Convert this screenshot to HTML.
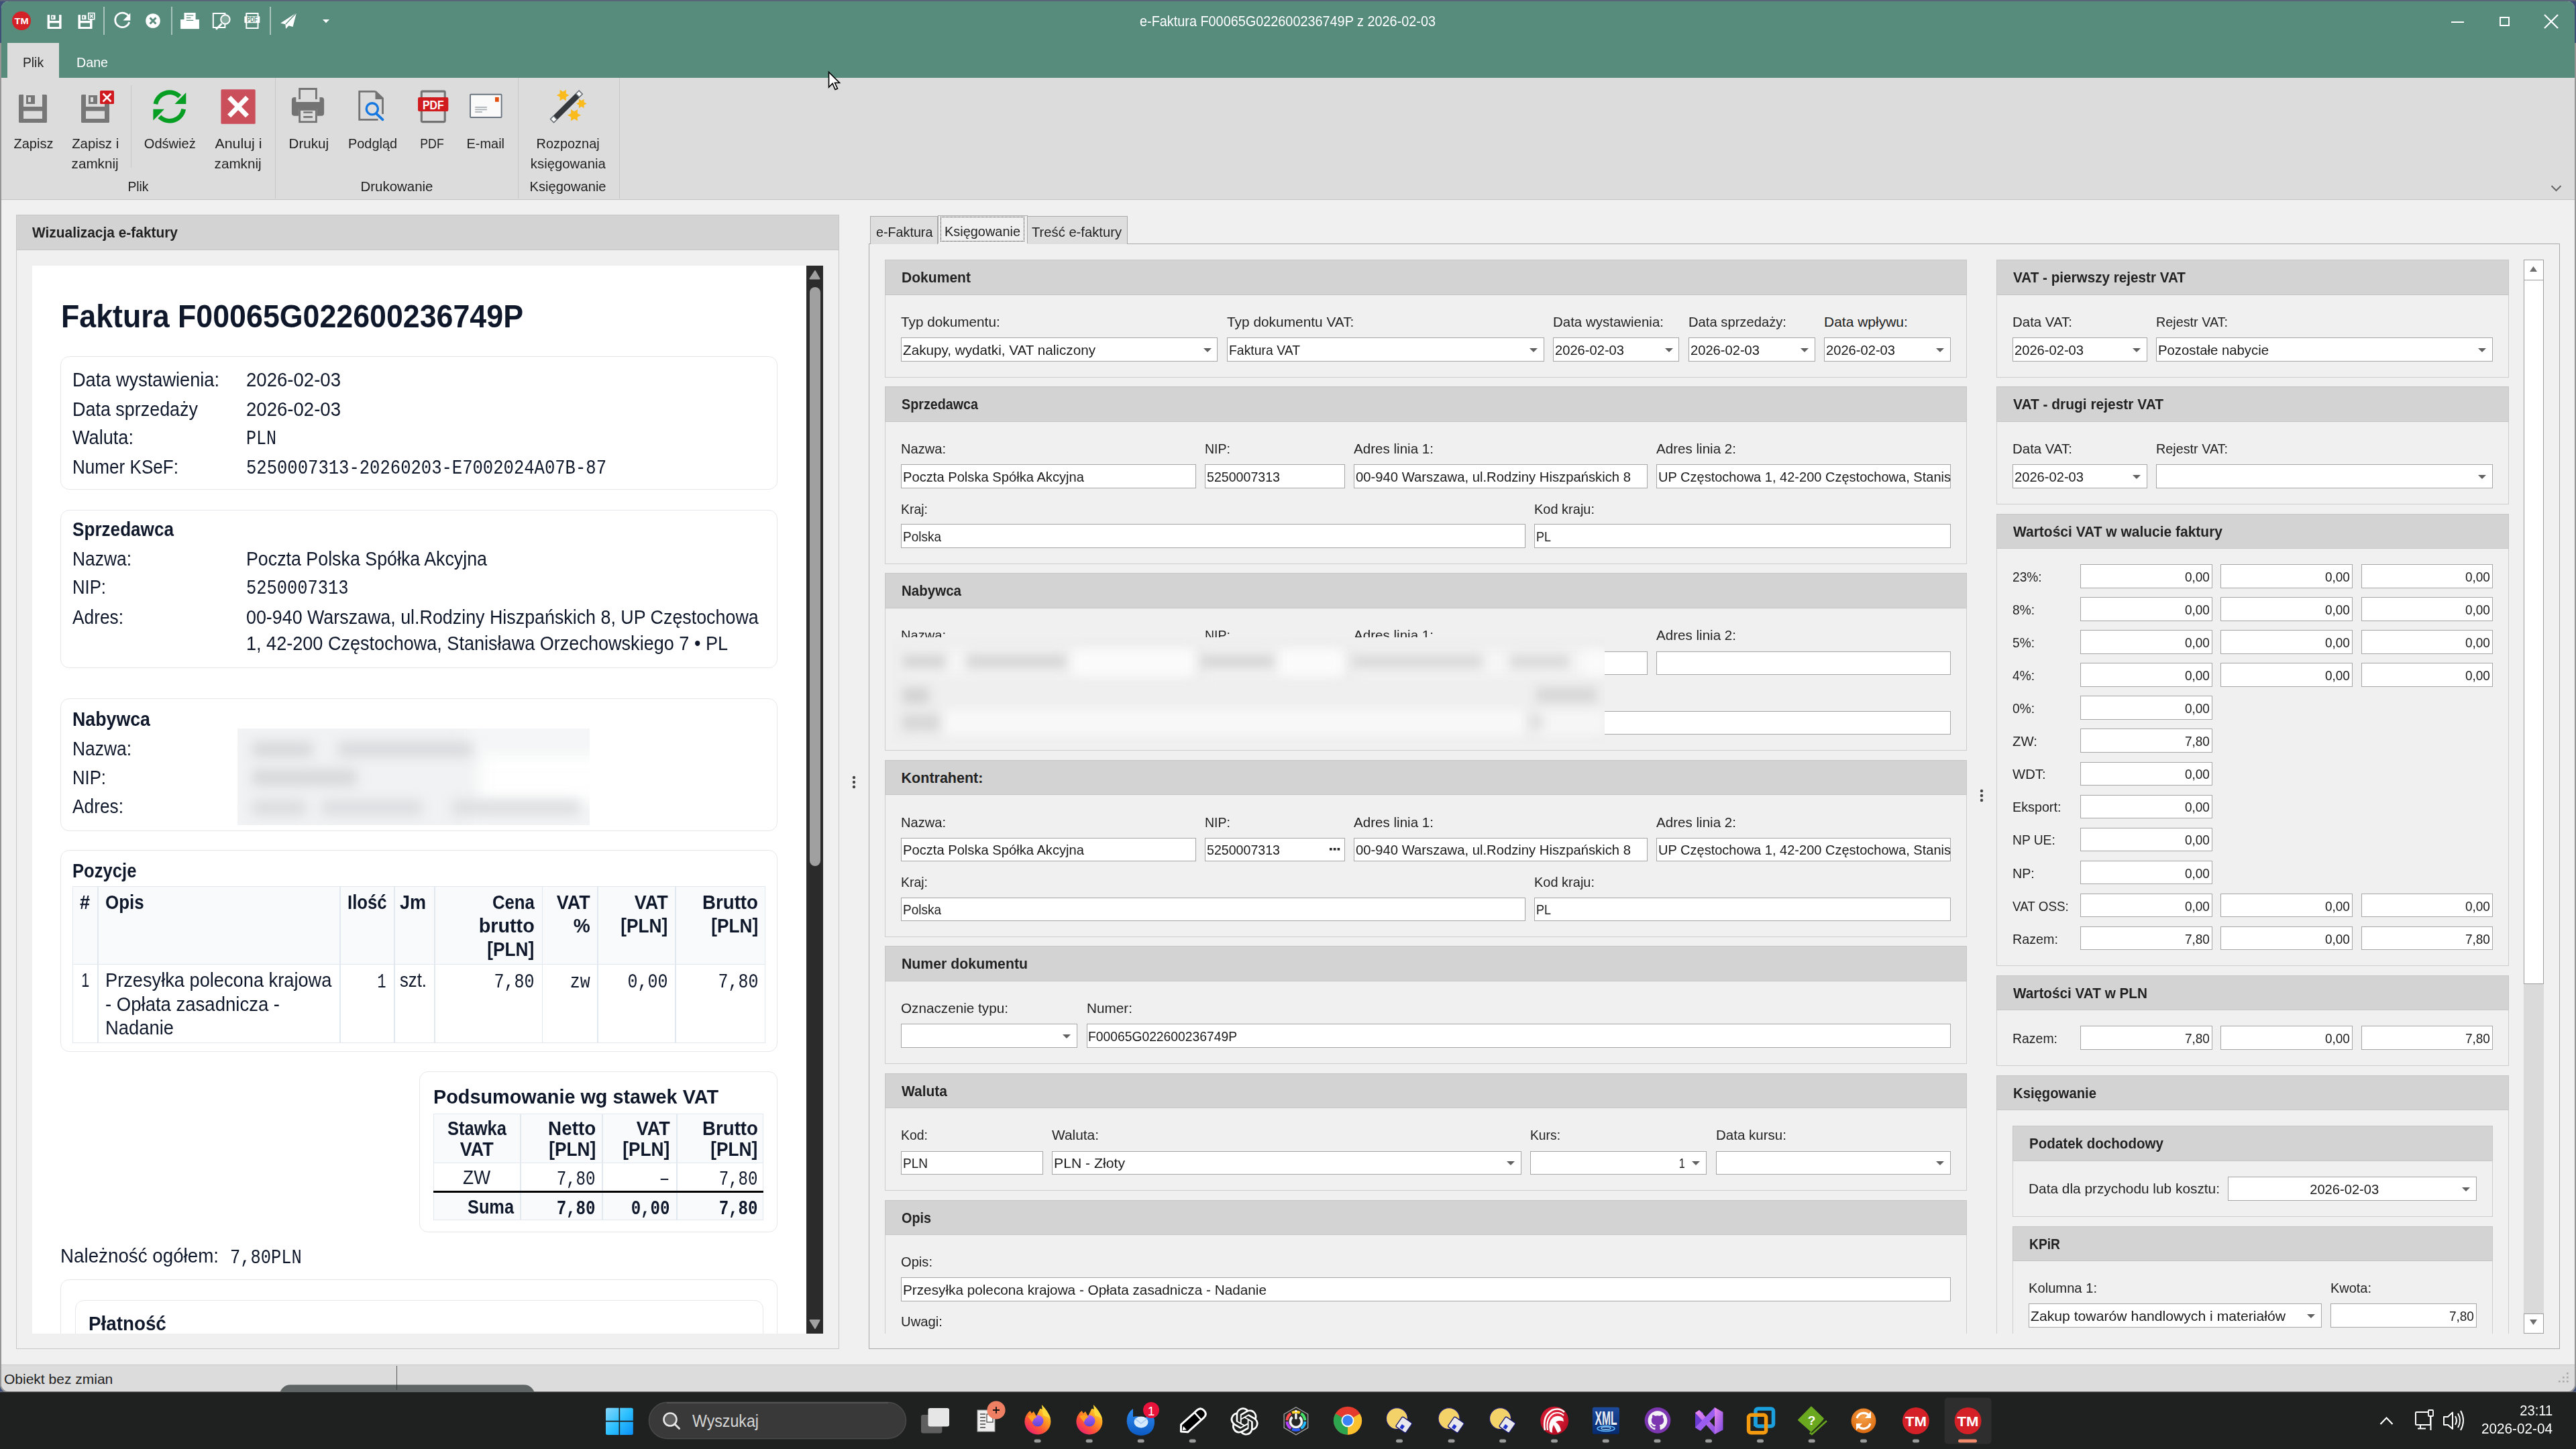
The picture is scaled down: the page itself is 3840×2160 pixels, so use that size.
<!DOCTYPE html>
<html><head><meta charset="utf-8"><style>
*{margin:0;padding:0;box-sizing:border-box}
html,body{width:3840px;height:2160px;overflow:hidden}
body{position:relative;background:#1c1c1c;font-family:"Liberation Sans",sans-serif;color:#222}
.a{position:absolute}
.t{position:absolute;white-space:pre;line-height:1}
svg{position:absolute;overflow:visible}

</style></head><body>
<div class="a" style="left:0px;top:0px;width:3840px;height:2080px;background:#3f5078"></div><div class="a" style="left:0px;top:0px;width:3840px;height:2px;background:#5a6478"></div><div class="a" style="left:0px;top:64px;width:3840px;height:2012px;background:#959595;border-radius:0 0 12px 12px"></div><div class="a" style="left:2px;top:1.5px;width:3836px;height:2072px;background:#f0f0f0;border-radius:10px 10px 11px 11px"></div><div class="a" style="left:2px;top:1.5px;width:3836px;height:114.5px;background:#578c7c;border-radius:10px 10px 0 0"></div><div class="a" style="left:2px;top:116px;width:3836px;height:181px;background:#dcdcdc"></div><div class="a" style="left:2px;top:297px;width:3836px;height:1px;background:#c4c4c4"></div><span class="t" style="left:1699.00px;top:21.53px;font-size:21.5px;font-family:'Liberation Sans',sans-serif;color:#fff;transform:scaleX(0.9231);transform-origin:left 0;">e-Faktura F00065G022600236749P z 2026-02-03</span><div class="a" style="left:3654px;top:32px;width:19px;height:2px;background:#fff"></div><div class="a" style="left:3726px;top:25px;width:15px;height:14px;border:2px solid #fff"></div><svg style="left:3792px;top:21px" width="22" height="22"><path d="M1 1L21 21M21 1L1 21" stroke="#fff" stroke-width="2.2"/></svg><svg style="left:1234px;top:106px" width="20" height="30"><path d="M1.5 1.5L1.5 24L7 18.5L11 27.5L14.5 26L10.5 17.5L17.5 17.5Z" fill="#fff" stroke="#000" stroke-width="1.6" stroke-linejoin="miter"/></svg><div class="a" style="left:11px;top:64px;width:77px;height:52px;background:#dcdcdc"></div><span class="t" style="left:34.00px;top:82.25px;font-size:21px;font-family:'Liberation Sans',sans-serif;color:#222;transform:scaleX(0.9160);transform-origin:left 0;">Plik</span><span class="t" style="left:113.50px;top:82.25px;font-size:21px;font-family:'Liberation Sans',sans-serif;color:#fff;transform:scaleX(0.9362);transform-origin:left 0;">Dane</span><div class="a" style="left:154px;top:10px;width:1.5px;height:42px;background:#a9c4bb"></div><div class="a" style="left:255px;top:10px;width:1.5px;height:42px;background:#a9c4bb"></div><div class="a" style="left:402px;top:10px;width:1.5px;height:42px;background:#a9c4bb"></div><div class="a" style="left:195px;top:127px;width:1px;height:123px;background:#c8c8c8"></div><div class="a" style="left:410px;top:116px;width:1px;height:180px;background:#c8c8c8"></div><div class="a" style="left:772px;top:116px;width:1px;height:180px;background:#c8c8c8"></div><div class="a" style="left:923px;top:116px;width:1px;height:180px;background:#c8c8c8"></div><span class="t" style="left:18.57px;top:203.25px;font-size:21px;font-family:'Liberation Sans',sans-serif;color:#222;transform:scaleX(0.9538);transform-origin:center 0;">Zapisz</span><span class="t" style="left:105.82px;top:203.25px;font-size:21px;font-family:'Liberation Sans',sans-serif;color:#222;transform:scaleX(0.9674);transform-origin:center 0;">Zapisz i</span><span class="t" style="left:106.41px;top:232.95px;font-size:21px;font-family:'Liberation Sans',sans-serif;color:#222;transform:scaleX(0.9833);transform-origin:center 0;">zamknij</span><span class="t" style="left:212.73px;top:203.25px;font-size:21px;font-family:'Liberation Sans',sans-serif;color:#222;transform:scaleX(0.9562);transform-origin:center 0;">Odśwież</span><span class="t" style="left:320.55px;top:203.25px;font-size:21px;font-family:'Liberation Sans',sans-serif;color:#222;transform:scaleX(1.0161);transform-origin:center 0;">Anuluj i</span><span class="t" style="left:319.41px;top:232.95px;font-size:21px;font-family:'Liberation Sans',sans-serif;color:#222;transform:scaleX(0.9833);transform-origin:center 0;">zamknij</span><span class="t" style="left:188.58px;top:266.86px;font-size:21px;font-family:'Liberation Sans',sans-serif;color:#222;transform:scaleX(0.9160);transform-origin:center 0;">Plik</span><span class="t" style="left:429.66px;top:203.25px;font-size:21px;font-family:'Liberation Sans',sans-serif;color:#222;transform:scaleX(0.9804);transform-origin:center 0;">Drukuj</span><span class="t" style="left:516.96px;top:203.25px;font-size:21px;font-family:'Liberation Sans',sans-serif;color:#222;transform:scaleX(0.9471);transform-origin:center 0;">Podgląd</span><span class="t" style="left:622.50px;top:203.25px;font-size:21px;font-family:'Liberation Sans',sans-serif;color:#222;transform:scaleX(0.8452);transform-origin:center 0;">PDF</span><span class="t" style="left:694.24px;top:203.25px;font-size:21px;font-family:'Liberation Sans',sans-serif;color:#222;transform:scaleX(0.9493);transform-origin:center 0;">E-mail</span><span class="t" style="left:797.38px;top:203.25px;font-size:21px;font-family:'Liberation Sans',sans-serif;color:#222;transform:scaleX(0.9473);transform-origin:center 0;">Rozpoznaj</span><span class="t" style="left:789.21px;top:232.95px;font-size:21px;font-family:'Liberation Sans',sans-serif;color:#222;transform:scaleX(0.9690);transform-origin:center 0;">księgowania</span><span class="t" style="left:535.55px;top:266.86px;font-size:21px;font-family:'Liberation Sans',sans-serif;color:#222;transform:scaleX(0.9739);transform-origin:center 0;">Drukowanie</span><span class="t" style="left:787.45px;top:266.86px;font-size:21px;font-family:'Liberation Sans',sans-serif;color:#222;transform:scaleX(0.9572);transform-origin:center 0;">Księgowanie</span><svg style="left:3802px;top:275px" width="18" height="12"><path d="M1.5 2L8.5 9L15.5 2" fill="none" stroke="#666" stroke-width="2"/></svg><div class="a" style="left:2px;top:2034px;width:3836px;height:40px;background:#dcdcdc;border-radius:0 0 11px 11px"></div><div class="a" style="left:2px;top:2034px;width:3836px;height:1px;background:#cbcbcb"></div><div class="a" style="left:591px;top:2036px;width:1px;height:36px;background:#5a5a5a"></div><span class="t" style="left:6.00px;top:2045.26px;font-size:21px;font-family:'Liberation Sans',sans-serif;color:#222;">Obiekt bez zmian</span><div class="a" style="left:0px;top:2075px;width:3840px;height:85px;background:#1f2020"></div><svg style="left:0;top:0" width="1000" height="300"><circle cx="32" cy="31" r="14" fill="#d42027"/><text x="32" y="36.3" text-anchor="middle" font-family="Liberation Sans" font-weight="bold" font-size="13.5" fill="#fff" textLength="21" lengthAdjust="spacingAndGlyphs">TM</text><g transform="translate(70.6,22.1) scale(0.5)"><path d="M1.5 0H7V18H35V0H40.5Q42 0 42 1.5V40.5Q42 42 40.5 42H1.5Q0 42 0 40.5V1.5Q0 0 1.5 0Z" fill="#fff"/><rect x="7" y="24.5" width="28" height="11.5" fill="#578c7c"/><rect x="11" y="1" width="13" height="13" fill="#fff"/><rect x="14" y="4" width="4" height="7" fill="#578c7c"/></g><g transform="translate(116.5,22.1) scale(0.5)"><path d="M1.5 0H7V18H35V0H40.5Q42 0 42 1.5V40.5Q42 42 40.5 42H1.5Q0 42 0 40.5V1.5Q0 0 1.5 0Z" fill="#fff"/><rect x="7" y="24.5" width="28" height="11.5" fill="#578c7c"/><rect x="11" y="1" width="13" height="13" fill="#fff"/><rect x="14" y="4" width="4" height="7" fill="#578c7c"/></g><rect x="131.8" y="19.5" width="9" height="9.2" fill="#578c7c" stroke="#fff" stroke-width="1.6"/><path d="M134 21.8L138.6 26.4M138.6 21.8L134 26.4" stroke="#fff" stroke-width="1.5"/><path d="M192.2 25.5A10.7 10.7 0 1 0 192.7 33" fill="none" stroke="#fff" stroke-width="2.8"/><path d="M194.3 19.5V30.5H183.5Z" fill="#fff"/><circle cx="228" cy="31" r="10.8" fill="#fff"/><path d="M223.5 26.5L232.5 35.5M232.5 26.5L223.5 35.5" stroke="#578c7c" stroke-width="3"/><rect x="269.1" y="29" width="27.8" height="14.1" fill="#fff"/><rect x="274.5" y="19" width="17.1" height="13.8" fill="#fff" stroke="#578c7c" stroke-width="0"/><path d="M277.8 22.8H288.3M277.8 26.7H284.5M277.8 30.3H288.3" stroke="#578c7c" stroke-width="1.3"/><rect x="317.8" y="20" width="17.6" height="21" fill="none" stroke="#fff" stroke-width="2"/><circle cx="335.9" cy="29" r="6.7" fill="#80a89b" stroke="#fff" stroke-width="2"/><path d="M330.5 35.3L322 43.8" stroke="#fff" stroke-width="2.8"/><rect x="367.3" y="20" width="17.2" height="22" fill="none" stroke="#fff" stroke-width="2"/><rect x="364.4" y="24.3" width="22.9" height="10" fill="#fff" rx="1"/><text x="375.9" y="33" text-anchor="middle" font-family="Liberation Sans" font-weight="bold" font-size="10.5" fill="#578c7c" textLength="16" lengthAdjust="spacingAndGlyphs">PDF</text><path d="M442 19L418.2 34.5L425.5 36.2L426 43L430.5 38.2L436.5 40Z" fill="#fff"/><path d="M442 19L426 36" stroke="#578c7c" stroke-width="1.2"/><path d="M481 29H491L486 34.3Z" fill="#fff"/><g transform="translate(28,141) scale(1)"><path d="M1.5 0H7V18H35V0H40.5Q42 0 42 1.5V40.5Q42 42 40.5 42H1.5Q0 42 0 40.5V1.5Q0 0 1.5 0Z" fill="#777"/><rect x="7" y="24.5" width="28" height="11.5" fill="#dcdcdc"/><rect x="11" y="1" width="13" height="13" fill="#777"/><rect x="14" y="4" width="4" height="7" fill="#dcdcdc"/></g><g transform="translate(121,141) scale(1)"><path d="M1.5 0H7V18H35V12H42V40.5Q42 42 40.5 42H1.5Q0 42 0 40.5V1.5Q0 0 1.5 0Z" fill="#777"/><rect x="7" y="24.5" width="28" height="11.5" fill="#dcdcdc"/><rect x="11" y="1" width="13" height="13" fill="#777"/><rect x="14" y="4" width="4" height="7" fill="#dcdcdc"/></g><rect x="149" y="135" width="21" height="20" rx="1.5" fill="#d11a1f"/><path d="M153.5 139.5L165.5 151.5M165.5 139.5L153.5 151.5" stroke="#fff" stroke-width="2.6"/><g transform="translate(220,125)" fill="#069e23"><path d="M11.9 30.2A21.2 21.2 0 0 1 47.8 18.9" fill="none" stroke="#069e23" stroke-width="6.8"/><path d="M40.5 30L57.3 30L57.3 12.9Z"/><path d="M53.7 37.6A21.2 21.2 0 0 1 17.8 48.9" fill="none" stroke="#069e23" stroke-width="6.8"/><path d="M8.4 37.7L25 37.7L8.4 54.5Z"/></g><rect x="329.4" y="133.2" width="51.3" height="51.5" rx="1.5" fill="#cb4f5b"/><path d="M341.6 145.3L368.5 172.9M368.5 145.3L341.6 172.9" stroke="#fff" stroke-width="7"/><path d="M446.6 148V132.5H471.4V148" fill="none" stroke="#737373" stroke-width="2.8"/><path d="M439 144.9H441.3V152H476.4V144.9H479Q483.1 144.9 483.1 149V168.7Q483.1 172.8 479 172.8H472.8V162H445.2V172.8H439Q434.9 172.8 434.9 168.7V149Q434.9 144.9 439 144.9Z" fill="#737373"/><rect x="446.6" y="163.4" width="24.8" height="18.3" fill="none" stroke="#737373" stroke-width="2.8"/><path d="M452.3 167.5H465.9M452.3 174.4H465.9" stroke="#737373" stroke-width="2.6"/><path d="M559.5 136.3H535.7V178.3H563.5M570.5 170V146.7L559.5 136.3" fill="none" stroke="#737373" stroke-width="2.8"/><path d="M559.5 135.5V148H570.5Z" fill="#737373"/><circle cx="554.8" cy="162.3" r="8.6" fill="none" stroke="#1577e0" stroke-width="3.4"/><path d="M561 169.3L570.5 178.3" stroke="#1577e0" stroke-width="3.8" stroke-linecap="round"/><rect x="628.3" y="136.1" width="34.9" height="45.5" rx="1.5" fill="none" stroke="#737373" stroke-width="3.1"/><rect x="623" y="144.9" width="45.3" height="21.1" rx="2" fill="#d01c1f"/><text x="645.8" y="162.6" text-anchor="middle" font-family="Liberation Sans" font-weight="bold" font-size="19" fill="#fff" textLength="31.6" lengthAdjust="spacingAndGlyphs">PDF</text><rect x="701" y="140.8" width="46.6" height="34.2" rx="1" fill="#fafafa" stroke="#6b7580" stroke-width="1.9"/><rect x="738" y="144.9" width="5.7" height="6.9" fill="#e34f0f"/><path d="M708.2 159.8H725.9M708.2 163.3H725.9M708.2 166.9H718.9" stroke="#a8aeb3" stroke-width="1.8"/><polygon points="848.60,142.00 843.70,144.60 843.90,150.14 839.20,147.20 834.50,150.14 834.70,144.60 829.80,142.00 834.70,139.40 834.50,133.86 839.20,136.80 843.90,133.86 843.70,139.40" fill="#fbbb1c"/><polygon points="874.60,154.40 870.52,156.55 870.70,161.15 866.80,158.70 862.90,161.15 863.08,156.55 859.00,154.40 863.08,152.25 862.90,147.65 866.80,150.10 870.70,147.65 870.52,152.25" fill="#fbbb1c"/><polygon points="866.00,171.70 860.76,174.45 861.00,180.36 856.00,177.20 851.00,180.36 851.24,174.45 846.00,171.70 851.24,168.95 851.00,163.04 856.00,166.20 861.00,163.04 860.76,168.95" fill="#fbbb1c"/><g transform="translate(844.35,158.85) rotate(-44.9)"><rect x="-30.7" y="-4.2" width="61.4" height="8.4" fill="#35393e"/><rect x="-30" y="-3.5" width="6.5" height="7" fill="#fff" stroke="#6b737b" stroke-width="1.4"/><rect x="23.5" y="-3.5" width="6.5" height="7" fill="#fff" stroke="#6b737b" stroke-width="1.4"/></g></svg><div class="a" style="left:24px;top:320px;width:1227px;height:1691px;background:#f0f0f0;border:1px solid #c8c8c8"></div><div class="a" style="left:24px;top:320px;width:1227px;height:53px;background:#d3d3d3;border:1px solid #c6c6c6"></div><span class="t" style="left:48.30px;top:336.73px;font-size:21.5px;font-family:'Liberation Sans',sans-serif;font-weight:bold;color:#222;transform:scaleX(0.9720);transform-origin:left 0;">Wizualizacja e-faktury</span><div class="a" style="left:48px;top:396px;width:1154px;height:1592px;background:#fff;overflow:hidden"><span class="t" style="left:43.00px;top:51.29px;font-size:49px;font-family:'Liberation Sans',sans-serif;font-weight:bold;color:#0f172a;transform:scaleX(0.9130);transform-origin:left 0;">Faktura F00065G022600236749P</span><div class="a" style="left:42px;top:135px;width:1069px;height:199px;background:#fff;border:1.5px solid #e5e7eb;border-radius:13px"></div><span class="t" style="left:60.00px;top:156.10px;font-size:29px;font-family:'Liberation Sans',sans-serif;color:#0f172a;transform:scaleX(0.9370);transform-origin:left 0;">Data wystawienia:</span><span class="t" style="left:319.00px;top:156.10px;font-size:29px;font-family:'Liberation Sans',sans-serif;color:#0f172a;transform:scaleX(0.9505);transform-origin:left 0;">2026-02-03</span><span class="t" style="left:60.00px;top:199.50px;font-size:29px;font-family:'Liberation Sans',sans-serif;color:#0f172a;transform:scaleX(0.9280);transform-origin:left 0;">Data sprzedaży</span><span class="t" style="left:319.00px;top:199.50px;font-size:29px;font-family:'Liberation Sans',sans-serif;color:#0f172a;transform:scaleX(0.9505);transform-origin:left 0;">2026-02-03</span><span class="t" style="left:60.00px;top:242.10px;font-size:29px;font-family:'Liberation Sans',sans-serif;color:#0f172a;transform:scaleX(0.9357);transform-origin:left 0;">Waluta:</span><span class="t" style="left:319.00px;top:244.42px;font-size:29px;font-family:'Liberation Mono',monospace;color:#0f172a;transform:scaleX(0.8618);transform-origin:left 0;">PLN</span><span class="t" style="left:60.00px;top:285.50px;font-size:29px;font-family:'Liberation Sans',sans-serif;color:#0f172a;transform:scaleX(0.8994);transform-origin:left 0;">Numer KSeF:</span><span class="t" style="left:319.00px;top:287.81px;font-size:29px;font-family:'Liberation Mono',monospace;color:#0f172a;transform:scaleX(0.8816);transform-origin:left 0;">5250007313-20260203-E7002024A07B-87</span><div class="a" style="left:42px;top:363.5px;width:1069px;height:236px;background:#fff;border:1.5px solid #e5e7eb;border-radius:13px"></div><span class="t" style="left:60.00px;top:378.50px;font-size:29px;font-family:'Liberation Sans',sans-serif;font-weight:bold;color:#0f172a;transform:scaleX(0.9007);transform-origin:left 0;">Sprzedawca</span><span class="t" style="left:60.00px;top:422.50px;font-size:29px;font-family:'Liberation Sans',sans-serif;color:#0f172a;transform:scaleX(0.9100);transform-origin:left 0;">Nazwa:</span><span class="t" style="left:319.00px;top:422.50px;font-size:29px;font-family:'Liberation Sans',sans-serif;color:#0f172a;transform:scaleX(0.9241);transform-origin:left 0;">Poczta Polska Spółka Akcyjna</span><span class="t" style="left:60.00px;top:464.50px;font-size:29px;font-family:'Liberation Sans',sans-serif;color:#0f172a;transform:scaleX(0.8864);transform-origin:left 0;">NIP:</span><span class="t" style="left:319.00px;top:466.81px;font-size:29px;font-family:'Liberation Mono',monospace;color:#0f172a;transform:scaleX(0.8763);transform-origin:left 0;">5250007313</span><span class="t" style="left:60.00px;top:509.50px;font-size:29px;font-family:'Liberation Sans',sans-serif;color:#0f172a;transform:scaleX(0.9066);transform-origin:left 0;">Adres:</span><span class="t" style="left:319.00px;top:509.50px;font-size:29px;font-family:'Liberation Sans',sans-serif;color:#0f172a;transform:scaleX(0.9254);transform-origin:left 0;">00-940 Warszawa, ul.Rodziny Hiszpańskich 8, UP Częstochowa</span><span class="t" style="left:319.00px;top:549.20px;font-size:29px;font-family:'Liberation Sans',sans-serif;color:#0f172a;transform:scaleX(0.9332);transform-origin:left 0;">1, 42-200 Częstochowa, Stanisława Orzechowskiego 7 • PL</span><div class="a" style="left:42px;top:645px;width:1069px;height:197.5px;background:#fff;border:1.5px solid #e5e7eb;border-radius:13px"></div><span class="t" style="left:60.00px;top:661.50px;font-size:29px;font-family:'Liberation Sans',sans-serif;font-weight:bold;color:#0f172a;transform:scaleX(0.9226);transform-origin:left 0;">Nabywca</span><span class="t" style="left:60.00px;top:706.20px;font-size:29px;font-family:'Liberation Sans',sans-serif;color:#0f172a;transform:scaleX(0.9100);transform-origin:left 0;">Nazwa:</span><span class="t" style="left:60.00px;top:748.50px;font-size:29px;font-family:'Liberation Sans',sans-serif;color:#0f172a;transform:scaleX(0.8864);transform-origin:left 0;">NIP:</span><span class="t" style="left:60.00px;top:792.20px;font-size:29px;font-family:'Liberation Sans',sans-serif;color:#0f172a;transform:scaleX(0.9066);transform-origin:left 0;">Adres:</span><div class="a" style="left:306px;top:689.7px;width:525px;height:144px;overflow:hidden;background:#fff"><div class="a" style="left:-20px;top:-20px;width:380px;height:200px;background:#f1f2f3;filter:blur(12px)"></div><div class="a" style="left:340px;top:-20px;width:220px;height:60px;background:#f4f5f6;filter:blur(12px)"></div><div class="a" style="left:350px;top:110px;width:220px;height:60px;background:#f3f4f5;filter:blur(12px)"></div><div class="a" style="left:22px;top:20px;width:90px;height:22px;background:#d6d7da;filter:blur(9px)"></div><div class="a" style="left:150px;top:20px;width:200px;height:22px;background:#d8d9dc;filter:blur(9px)"></div><div class="a" style="left:22px;top:61px;width:155px;height:24px;background:#d6d7da;filter:blur(9px)"></div><div class="a" style="left:22px;top:107px;width:80px;height:22px;background:#dadbdd;filter:blur(9px)"></div><div class="a" style="left:125px;top:107px;width:150px;height:22px;background:#dcdde0;filter:blur(9px)"></div><div class="a" style="left:320px;top:107px;width:190px;height:22px;background:#dcdde0;filter:blur(9px)"></div></div><div class="a" style="left:42px;top:871px;width:1069px;height:301px;background:#fff;border:1.5px solid #e5e7eb;border-radius:13px"></div><span class="t" style="left:60.00px;top:887.50px;font-size:29px;font-family:'Liberation Sans',sans-serif;font-weight:bold;color:#0f172a;transform:scaleX(0.8833);transform-origin:left 0;">Pozycje</span><div class="a" style="left:60px;top:924.5px;width:1033px;height:117px;background:#f8fafc"></div><div class="a" style="left:60px;top:924.5px;width:1033px;height:234px;border:1.5px solid #e2e8f0"></div><div class="a" style="left:60px;top:1040.5px;width:1033px;height:1.5px;background:#e2e8f0"></div><div class="a" style="left:97px;top:924.5px;width:1.5px;height:234px;background:#e2e8f0"></div><div class="a" style="left:458px;top:924.5px;width:1.5px;height:234px;background:#e2e8f0"></div><div class="a" style="left:539px;top:924.5px;width:1.5px;height:234px;background:#e2e8f0"></div><div class="a" style="left:599px;top:924.5px;width:1.5px;height:234px;background:#e2e8f0"></div><div class="a" style="left:759.5px;top:924.5px;width:1.5px;height:234px;background:#e2e8f0"></div><div class="a" style="left:842.4px;top:924.5px;width:1.5px;height:234px;background:#e2e8f0"></div><div class="a" style="left:958px;top:924.5px;width:1.5px;height:234px;background:#e2e8f0"></div><span class="t" style="left:71.00px;top:934.50px;font-size:29px;font-family:'Liberation Sans',sans-serif;font-weight:bold;color:#0f172a;transform:scaleX(0.9293);transform-origin:left 0;">#</span><span class="t" style="left:108.90px;top:934.50px;font-size:29px;font-family:'Liberation Sans',sans-serif;font-weight:bold;color:#0f172a;transform:scaleX(0.8935);transform-origin:left 0;">Opis</span><span class="t" style="left:469.80px;top:934.50px;font-size:29px;font-family:'Liberation Sans',sans-serif;font-weight:bold;color:#0f172a;transform:scaleX(0.8866);transform-origin:left 0;">Ilość</span><span class="t" style="left:548.00px;top:934.50px;font-size:29px;font-family:'Liberation Sans',sans-serif;font-weight:bold;color:#0f172a;transform:scaleX(0.9303);transform-origin:left 0;">Jm</span><span class="t" style="left:677.58px;top:934.50px;font-size:29px;font-family:'Liberation Sans',sans-serif;font-weight:bold;color:#0f172a;transform:scaleX(0.8883);transform-origin:right 0;">Cena</span><span class="t" style="left:664.75px;top:969.50px;font-size:29px;font-family:'Liberation Sans',sans-serif;font-weight:bold;color:#0f172a;transform:scaleX(0.9910);transform-origin:right 0;">brutto</span><span class="t" style="left:671.17px;top:1004.50px;font-size:29px;font-family:'Liberation Sans',sans-serif;font-weight:bold;color:#0f172a;transform:scaleX(0.9052);transform-origin:right 0;">[PLN]</span><span class="t" style="left:777.80px;top:934.50px;font-size:29px;font-family:'Liberation Sans',sans-serif;font-weight:bold;color:#0f172a;transform:scaleX(0.9310);transform-origin:right 0;">VAT</span><span class="t" style="left:805.70px;top:969.50px;font-size:29px;font-family:'Liberation Sans',sans-serif;font-weight:bold;color:#0f172a;transform:scaleX(0.9691);transform-origin:right 0;">%</span><span class="t" style="left:893.60px;top:934.50px;font-size:29px;font-family:'Liberation Sans',sans-serif;font-weight:bold;color:#0f172a;transform:scaleX(0.9310);transform-origin:right 0;">VAT</span><span class="t" style="left:869.97px;top:969.50px;font-size:29px;font-family:'Liberation Sans',sans-serif;font-weight:bold;color:#0f172a;transform:scaleX(0.9052);transform-origin:right 0;">[PLN]</span><span class="t" style="left:995.42px;top:934.50px;font-size:29px;font-family:'Liberation Sans',sans-serif;font-weight:bold;color:#0f172a;transform:scaleX(0.9542);transform-origin:right 0;">Brutto</span><span class="t" style="left:1005.07px;top:969.50px;font-size:29px;font-family:'Liberation Sans',sans-serif;font-weight:bold;color:#0f172a;transform:scaleX(0.9052);transform-origin:right 0;">[PLN]</span><span class="t" style="left:68.86px;top:1051.49px;font-size:29px;font-family:'Liberation Sans',sans-serif;color:#0f172a;transform:scaleX(0.7435);transform-origin:right 0;">1</span><span class="t" style="left:108.90px;top:1051.49px;font-size:29px;font-family:'Liberation Sans',sans-serif;color:#0f172a;transform:scaleX(0.9386);transform-origin:left 0;">Przesyłka polecona krajowa</span><span class="t" style="left:108.90px;top:1087.49px;font-size:29px;font-family:'Liberation Sans',sans-serif;color:#0f172a;transform:scaleX(0.9489);transform-origin:left 0;">- Opłata zasadnicza -</span><span class="t" style="left:108.90px;top:1122.09px;font-size:29px;font-family:'Liberation Sans',sans-serif;color:#0f172a;transform:scaleX(0.9442);transform-origin:left 0;">Nadanie</span><span class="t" style="left:509.99px;top:1053.82px;font-size:29px;font-family:'Liberation Mono',monospace;color:#0f172a;transform:scaleX(0.7469);transform-origin:right 0;">1</span><span class="t" style="left:548.00px;top:1051.49px;font-size:29px;font-family:'Liberation Sans',sans-serif;color:#0f172a;transform:scaleX(0.8864);transform-origin:left 0;">szt.</span><span class="t" style="left:678.88px;top:1053.82px;font-size:29px;font-family:'Liberation Mono',monospace;color:#0f172a;transform:scaleX(0.8618);transform-origin:right 0;">7,80</span><span class="t" style="left:796.69px;top:1053.82px;font-size:29px;font-family:'Liberation Mono',monospace;color:#0f172a;transform:scaleX(0.8618);transform-origin:right 0;">zw</span><span class="t" style="left:877.67px;top:1053.82px;font-size:29px;font-family:'Liberation Mono',monospace;color:#0f172a;transform:scaleX(0.8618);transform-origin:right 0;">0,00</span><span class="t" style="left:1012.78px;top:1053.82px;font-size:29px;font-family:'Liberation Mono',monospace;color:#0f172a;transform:scaleX(0.8618);transform-origin:right 0;">7,80</span><div class="a" style="left:577px;top:1201px;width:534px;height:240px;background:#fff;border:1.5px solid #e5e7eb;border-radius:13px"></div><span class="t" style="left:598.00px;top:1224.99px;font-size:29px;font-family:'Liberation Sans',sans-serif;font-weight:bold;color:#0f172a;transform:scaleX(0.9940);transform-origin:left 0;">Podsumowanie wg stawek VAT</span><div class="a" style="left:598px;top:1264px;width:492px;height:73px;background:#f8fafc"></div><div class="a" style="left:598px;top:1380px;width:492px;height:43px;background:#f8fafc"></div><div class="a" style="left:598px;top:1264px;width:492px;height:159px;border:1.5px solid #e2e8f0"></div><div class="a" style="left:598px;top:1336.5px;width:492px;height:1.5px;background:#e2e8f0"></div><div class="a" style="left:727px;top:1264px;width:1.5px;height:159px;background:#e2e8f0"></div><div class="a" style="left:849px;top:1264px;width:1.5px;height:159px;background:#e2e8f0"></div><div class="a" style="left:960px;top:1264px;width:1.5px;height:159px;background:#e2e8f0"></div><div class="a" style="left:598px;top:1378.5px;width:492px;height:3px;background:#000"></div><span class="t" style="left:613.02px;top:1272.49px;font-size:29px;font-family:'Liberation Sans',sans-serif;font-weight:bold;color:#0f172a;transform:scaleX(0.8804);transform-origin:center 0;">Stawka</span><span class="t" style="left:636.15px;top:1303.49px;font-size:29px;font-family:'Liberation Sans',sans-serif;font-weight:bold;color:#0f172a;transform:scaleX(0.9310);transform-origin:center 0;">VAT</span><span class="t" style="left:765.89px;top:1272.49px;font-size:29px;font-family:'Liberation Sans',sans-serif;font-weight:bold;color:#0f172a;transform:scaleX(0.9580);transform-origin:right 0;">Netto</span><span class="t" style="left:762.67px;top:1303.49px;font-size:29px;font-family:'Liberation Sans',sans-serif;font-weight:bold;color:#0f172a;transform:scaleX(0.9052);transform-origin:right 0;">[PLN]</span><span class="t" style="left:897.10px;top:1272.49px;font-size:29px;font-family:'Liberation Sans',sans-serif;font-weight:bold;color:#0f172a;transform:scaleX(0.9310);transform-origin:right 0;">VAT</span><span class="t" style="left:873.47px;top:1303.49px;font-size:29px;font-family:'Liberation Sans',sans-serif;font-weight:bold;color:#0f172a;transform:scaleX(0.9052);transform-origin:right 0;">[PLN]</span><span class="t" style="left:994.52px;top:1272.49px;font-size:29px;font-family:'Liberation Sans',sans-serif;font-weight:bold;color:#0f172a;transform:scaleX(0.9542);transform-origin:right 0;">Brutto</span><span class="t" style="left:1004.17px;top:1303.49px;font-size:29px;font-family:'Liberation Sans',sans-serif;font-weight:bold;color:#0f172a;transform:scaleX(0.9052);transform-origin:right 0;">[PLN]</span><span class="t" style="left:640.45px;top:1345.49px;font-size:29px;font-family:'Liberation Sans',sans-serif;color:#0f172a;transform:scaleX(0.9092);transform-origin:center 0;">ZW</span><span class="t" style="left:770.38px;top:1347.82px;font-size:29px;font-family:'Liberation Mono',monospace;color:#0f172a;transform:scaleX(0.8330);transform-origin:right 0;">7,80</span><span class="t" style="left:933.39px;top:1347.82px;font-size:29px;font-family:'Liberation Mono',monospace;color:#0f172a;transform:scaleX(0.9192);transform-origin:right 0;">–</span><span class="t" style="left:1011.88px;top:1347.82px;font-size:29px;font-family:'Liberation Mono',monospace;color:#0f172a;transform:scaleX(0.8330);transform-origin:right 0;">7,80</span><span class="t" style="left:639.02px;top:1389.49px;font-size:29px;font-family:'Liberation Sans',sans-serif;font-weight:bold;color:#0f172a;transform:scaleX(0.8736);transform-origin:right 0;">Suma</span><span class="t" style="left:770.38px;top:1391.82px;font-size:29px;font-family:'Liberation Mono',monospace;font-weight:bold;color:#0f172a;transform:scaleX(0.8330);transform-origin:right 0;">7,80</span><span class="t" style="left:881.17px;top:1391.82px;font-size:29px;font-family:'Liberation Mono',monospace;font-weight:bold;color:#0f172a;transform:scaleX(0.8330);transform-origin:right 0;">0,00</span><span class="t" style="left:1011.88px;top:1391.82px;font-size:29px;font-family:'Liberation Mono',monospace;font-weight:bold;color:#0f172a;transform:scaleX(0.8330);transform-origin:right 0;">7,80</span><span class="t" style="left:42.40px;top:1462.49px;font-size:29px;font-family:'Liberation Sans',sans-serif;color:#0f172a;transform:scaleX(0.9569);transform-origin:left 0;">Należność ogółem:</span><span class="t" style="left:294.90px;top:1464.82px;font-size:29px;font-family:'Liberation Mono',monospace;color:#0f172a;transform:scaleX(0.8766);transform-origin:left 0;">7,80PLN</span><div class="a" style="left:42px;top:1511px;width:1069px;height:200px;background:#fff;border:1.5px solid #e5e7eb;border-radius:13px"></div><div class="a" style="left:64px;top:1541.6px;width:1026px;height:150px;background:#fff;border:1.5px solid #e5e7eb;border-radius:13px"></div><span class="t" style="left:83.70px;top:1563.49px;font-size:29px;font-family:'Liberation Sans',sans-serif;font-weight:bold;color:#0f172a;transform:scaleX(0.9580);transform-origin:left 0;">Płatność</span></div><div class="a" style="left:1202px;top:396px;width:25px;height:1592px;background:#2b2b2b"></div><svg style="left:1202px;top:396px" width="25" height="1591"><path d="M13 8L19.5 19.5H5.5Z" fill="#a0a0a0" stroke="#a0a0a0" stroke-width="2" stroke-linejoin="round"/><rect x="5" y="32" width="16" height="863" rx="8" fill="#a0a0a0"/><path d="M13 1584L19.5 1572H5.5Z" fill="#a0a0a0" stroke="#a0a0a0" stroke-width="2" stroke-linejoin="round"/></svg><div class="a" style="left:1295px;top:363px;width:2521px;height:1648px;background:#f0f0f0;border:1px solid #a9a9a9"></div><div class="a" style="left:1297px;top:322.3px;width:101px;height:41.5px;background:#dedede;border:1px solid #a9a9a9;border-bottom:none"></div><div class="a" style="left:1531px;top:322.3px;width:150px;height:41.5px;background:#dedede;border:1px solid #a9a9a9;border-bottom:none"></div><div class="a" style="left:1397.5px;top:320.5px;width:134.5px;height:43.5px;background:#f0f0f0;border:1px solid #a9a9a9;border-bottom:none"></div><div class="a" style="left:1397.5px;top:362.5px;width:134.5px;height:2px;background:#f0f0f0"></div><div class="a" style="left:1402px;top:323.2px;width:125px;height:37.3px;border:1.5px dotted #222"></div><span class="t" style="left:1305.60px;top:335.45px;font-size:21px;font-family:'Liberation Sans',sans-serif;color:#222;transform:scaleX(0.9391);transform-origin:left 0;">e-Faktura</span><span class="t" style="left:1408.00px;top:334.36px;font-size:21px;font-family:'Liberation Sans',sans-serif;color:#222;transform:scaleX(0.9488);transform-origin:left 0;">Księgowanie</span><span class="t" style="left:1538.00px;top:334.65px;font-size:21px;font-family:'Liberation Sans',sans-serif;color:#222;transform:scaleX(0.9623);transform-origin:left 0;">Treść e-faktury</span><div class="a" style="left:1319px;top:387.2px;width:1613px;height:175.8px;background:#f0f0f0;border:1px solid #cdcdcd"></div><div class="a" style="left:1319px;top:387.2px;width:1613px;height:52.5px;background:#d3d3d3;border:1px solid #c6c6c6"></div><span class="t" style="left:1343.60px;top:404.23px;font-size:21.5px;font-family:'Liberation Sans',sans-serif;font-weight:bold;color:#222;transform:scaleX(0.9798);transform-origin:left 0;">Dokument</span><span class="t" style="left:1343.40px;top:469.25px;font-size:21px;font-family:'Liberation Sans',sans-serif;color:#222;transform:scaleX(0.9885);transform-origin:left 0;">Typ dokumentu:</span><div class="a" style="left:1343px;top:503.2px;width:472.4000000000001px;height:35.5px;background:#fff;border:1px solid #a6a6a6"></div><svg style="left:1793.7px;top:518.7px" width="12" height="6"><path d="M0 0H12L6 6Z" fill="#606060"/></svg><span class="t" style="left:1345.50px;top:510.96px;font-size:21px;font-family:'Liberation Sans',sans-serif;color:#1a1a1a;transform:scaleX(0.9849);transform-origin:left 0;">Zakupy, wydatki, VAT naliczony</span><span class="t" style="left:1829.30px;top:469.25px;font-size:21px;font-family:'Liberation Sans',sans-serif;color:#222;transform:scaleX(0.9934);transform-origin:left 0;">Typ dokumentu VAT:</span><div class="a" style="left:1829.3px;top:503.2px;width:472.39999999999986px;height:35.5px;background:#fff;border:1px solid #a6a6a6"></div><svg style="left:2280.0px;top:518.7px" width="12" height="6"><path d="M0 0H12L6 6Z" fill="#606060"/></svg><span class="t" style="left:1831.80px;top:510.96px;font-size:21px;font-family:'Liberation Sans',sans-serif;color:#1a1a1a;transform:scaleX(0.9236);transform-origin:left 0;">Faktura VAT</span><span class="t" style="left:2315.20px;top:469.25px;font-size:21px;font-family:'Liberation Sans',sans-serif;color:#222;transform:scaleX(0.9749);transform-origin:left 0;">Data wystawienia:</span><div class="a" style="left:2315.2px;top:503.2px;width:188.30000000000018px;height:35.5px;background:#fff;border:1px solid #a6a6a6"></div><svg style="left:2481.8px;top:518.7px" width="12" height="6"><path d="M0 0H12L6 6Z" fill="#606060"/></svg><span class="t" style="left:2317.70px;top:510.96px;font-size:21px;font-family:'Liberation Sans',sans-serif;color:#1a1a1a;transform:scaleX(0.9588);transform-origin:left 0;">2026-02-03</span><span class="t" style="left:2517.00px;top:469.25px;font-size:21px;font-family:'Liberation Sans',sans-serif;color:#222;transform:scaleX(0.9621);transform-origin:left 0;">Data sprzedaży:</span><div class="a" style="left:2517px;top:503.2px;width:188.5px;height:35.5px;background:#fff;border:1px solid #a6a6a6"></div><svg style="left:2683.8px;top:518.7px" width="12" height="6"><path d="M0 0H12L6 6Z" fill="#606060"/></svg><span class="t" style="left:2519.50px;top:510.96px;font-size:21px;font-family:'Liberation Sans',sans-serif;color:#1a1a1a;transform:scaleX(0.9588);transform-origin:left 0;">2026-02-03</span><span class="t" style="left:2719.00px;top:469.25px;font-size:21px;font-family:'Liberation Sans',sans-serif;color:#222;">Data wpływu:</span><div class="a" style="left:2719px;top:503.2px;width:188.69999999999982px;height:35.5px;background:#fff;border:1px solid #a6a6a6"></div><svg style="left:2886.0px;top:518.7px" width="12" height="6"><path d="M0 0H12L6 6Z" fill="#606060"/></svg><span class="t" style="left:2721.50px;top:510.96px;font-size:21px;font-family:'Liberation Sans',sans-serif;color:#1a1a1a;transform:scaleX(0.9588);transform-origin:left 0;">2026-02-03</span><div class="a" style="left:1319px;top:576px;width:1613px;height:265px;background:#f0f0f0;border:1px solid #cdcdcd"></div><div class="a" style="left:1319px;top:576px;width:1613px;height:52.5px;background:#d3d3d3;border:1px solid #c6c6c6"></div><span class="t" style="left:1343.60px;top:593.03px;font-size:21.5px;font-family:'Liberation Sans',sans-serif;font-weight:bold;color:#222;transform:scaleX(0.9173);transform-origin:left 0;">Sprzedawca</span><span class="t" style="left:1343.40px;top:658.25px;font-size:21px;font-family:'Liberation Sans',sans-serif;color:#222;transform:scaleX(0.9567);transform-origin:left 0;">Nazwa:</span><div class="a" style="left:1343px;top:692px;width:439.5px;height:35.5px;background:#fff;border:1px solid #a6a6a6"></div><span class="t" style="left:1345.50px;top:699.75px;font-size:21px;font-family:'Liberation Sans',sans-serif;color:#1a1a1a;transform:scaleX(0.9597);transform-origin:left 0;">Poczta Polska Spółka Akcyjna</span><span class="t" style="left:1796.00px;top:658.25px;font-size:21px;font-family:'Liberation Sans',sans-serif;color:#222;transform:scaleX(0.9304);transform-origin:left 0;">NIP:</span><div class="a" style="left:1796px;top:692px;width:208.70000000000005px;height:35.5px;background:#fff;border:1px solid #a6a6a6"></div><span class="t" style="left:1798.50px;top:699.75px;font-size:21px;font-family:'Liberation Sans',sans-serif;color:#1a1a1a;transform:scaleX(0.9332);transform-origin:left 0;">5250007313</span><span class="t" style="left:2018.30px;top:658.25px;font-size:21px;font-family:'Liberation Sans',sans-serif;color:#222;transform:scaleX(0.9802);transform-origin:left 0;">Adres linia 1:</span><div class="a" style="left:2018.3px;top:692px;width:437.29999999999995px;height:35.5px;background:#fff;border:1px solid #a6a6a6"></div><span class="t" style="left:2020.80px;top:699.75px;font-size:21px;font-family:'Liberation Sans',sans-serif;color:#1a1a1a;transform:scaleX(0.9641);transform-origin:left 0;">00-940 Warszawa, ul.Rodziny Hiszpańskich 8</span><span class="t" style="left:2469.00px;top:658.25px;font-size:21px;font-family:'Liberation Sans',sans-serif;color:#222;transform:scaleX(0.9802);transform-origin:left 0;">Adres linia 2:</span><div class="a" style="left:2469px;top:692px;width:439px;height:35.5px;background:#fff;border:1px solid #a6a6a6"></div><span class="t" style="left:2471.50px;top:699.75px;font-size:21px;font-family:'Liberation Sans',sans-serif;color:#1a1a1a;transform:scaleX(0.9536);transform-origin:left 0;">UP Częstochowa 1, 42-200 Częstochowa, Stanis</span><span class="t" style="left:1343.40px;top:747.75px;font-size:21px;font-family:'Liberation Sans',sans-serif;color:#222;transform:scaleX(0.9262);transform-origin:left 0;">Kraj:</span><div class="a" style="left:1343px;top:781px;width:930.5999999999999px;height:35.5px;background:#fff;border:1px solid #a6a6a6"></div><span class="t" style="left:1345.50px;top:788.75px;font-size:21px;font-family:'Liberation Sans',sans-serif;color:#1a1a1a;transform:scaleX(0.9043);transform-origin:left 0;">Polska</span><span class="t" style="left:2287.00px;top:747.75px;font-size:21px;font-family:'Liberation Sans',sans-serif;color:#222;transform:scaleX(0.9518);transform-origin:left 0;">Kod kraju:</span><div class="a" style="left:2287px;top:781px;width:621px;height:35.5px;background:#fff;border:1px solid #a6a6a6"></div><span class="t" style="left:2289.50px;top:788.75px;font-size:21px;font-family:'Liberation Sans',sans-serif;color:#1a1a1a;transform:scaleX(0.8564);transform-origin:left 0;">PL</span><div class="a" style="left:1319px;top:854px;width:1613px;height:265px;background:#f0f0f0;border:1px solid #cdcdcd"></div><div class="a" style="left:1319px;top:854px;width:1613px;height:52.5px;background:#d3d3d3;border:1px solid #c6c6c6"></div><span class="t" style="left:1343.60px;top:871.03px;font-size:21.5px;font-family:'Liberation Sans',sans-serif;font-weight:bold;color:#222;transform:scaleX(0.9547);transform-origin:left 0;">Nabywca</span><span class="t" style="left:1343.40px;top:936.25px;font-size:21px;font-family:'Liberation Sans',sans-serif;color:#222;transform:scaleX(0.9567);transform-origin:left 0;">Nazwa:</span><span class="t" style="left:1796.00px;top:936.25px;font-size:21px;font-family:'Liberation Sans',sans-serif;color:#222;transform:scaleX(0.9304);transform-origin:left 0;">NIP:</span><span class="t" style="left:2018.30px;top:936.25px;font-size:21px;font-family:'Liberation Sans',sans-serif;color:#222;transform:scaleX(0.9802);transform-origin:left 0;">Adres linia 1:</span><span class="t" style="left:2469.00px;top:936.25px;font-size:21px;font-family:'Liberation Sans',sans-serif;color:#222;transform:scaleX(0.9802);transform-origin:left 0;">Adres linia 2:</span><div class="a" style="left:1343px;top:970.6px;width:439.5px;height:35.5px;background:#fff;border:1px solid #a6a6a6"></div><div class="a" style="left:1796px;top:970.6px;width:208.70000000000005px;height:35.5px;background:#fff;border:1px solid #a6a6a6"></div><div class="a" style="left:2018.3px;top:970.6px;width:437.29999999999995px;height:35.5px;background:#fff;border:1px solid #a6a6a6"></div><div class="a" style="left:2469px;top:970.6px;width:439px;height:35.5px;background:#fff;border:1px solid #a6a6a6"></div><span class="t" style="left:1343.40px;top:1025.76px;font-size:21px;font-family:'Liberation Sans',sans-serif;color:#222;transform:scaleX(0.9262);transform-origin:left 0;">Kraj:</span><span class="t" style="left:2287.00px;top:1025.76px;font-size:21px;font-family:'Liberation Sans',sans-serif;color:#222;transform:scaleX(0.9518);transform-origin:left 0;">Kod kraju:</span><div class="a" style="left:1343px;top:1059.5px;width:930.5999999999999px;height:35.5px;background:#fff;border:1px solid #a6a6a6"></div><div class="a" style="left:2287px;top:1059.5px;width:621px;height:35.5px;background:#fff;border:1px solid #a6a6a6"></div><div class="a" style="left:1330px;top:950px;width:1062px;height:158px;background:#efefef;overflow:hidden"><div class="a" style="left:13px;top:20px;width:440px;height:36px;background:#f6f6f6;filter:blur(8px)"></div><div class="a" style="left:270px;top:20px;width:180px;height:36px;background:#fbfbfb;filter:blur(8px)"></div><div class="a" style="left:466px;top:20px;width:209px;height:36px;background:#f7f7f7;filter:blur(8px)"></div><div class="a" style="left:580px;top:20px;width:90px;height:36px;background:#fbfbfb;filter:blur(8px)"></div><div class="a" style="left:688px;top:20px;width:374px;height:36px;background:#f6f6f6;filter:blur(8px)"></div><div class="a" style="left:1030px;top:20px;width:40px;height:36px;background:#fafafa;filter:blur(8px)"></div><div class="a" style="left:75px;top:108px;width:870px;height:38px;background:#f8f8f8;filter:blur(8px)"></div><div class="a" style="left:957px;top:108px;width:105px;height:38px;background:#f6f6f6;filter:blur(8px)"></div><div class="a" style="left:15px;top:25px;width:65px;height:22px;background:#d4d4d4;filter:blur(8px)"></div><div class="a" style="left:110px;top:25px;width:150px;height:22px;background:#d6d6d6;filter:blur(8px)"></div><div class="a" style="left:460px;top:25px;width:110px;height:22px;background:#d6d6d6;filter:blur(8px)"></div><div class="a" style="left:685px;top:25px;width:195px;height:22px;background:#d9d9d9;filter:blur(8px)"></div><div class="a" style="left:920px;top:25px;width:90px;height:22px;background:#dadada;filter:blur(8px)"></div><div class="a" style="left:15px;top:75px;width:40px;height:24px;background:#d2d2d2;filter:blur(8px)"></div><div class="a" style="left:960px;top:75px;width:90px;height:22px;background:#d6d6d6;filter:blur(8px)"></div><div class="a" style="left:15px;top:115px;width:55px;height:24px;background:#d6d6d6;filter:blur(8px)"></div><div class="a" style="left:950px;top:115px;width:20px;height:22px;background:#dddddd;filter:blur(8px)"></div></div><div class="a" style="left:1319px;top:1132.7px;width:1613px;height:264.29999999999995px;background:#f0f0f0;border:1px solid #cdcdcd"></div><div class="a" style="left:1319px;top:1132.7px;width:1613px;height:52.5px;background:#d3d3d3;border:1px solid #c6c6c6"></div><span class="t" style="left:1343.60px;top:1149.73px;font-size:21.5px;font-family:'Liberation Sans',sans-serif;font-weight:bold;color:#222;">Kontrahent:</span><span class="t" style="left:1343.40px;top:1214.96px;font-size:21px;font-family:'Liberation Sans',sans-serif;color:#222;transform:scaleX(0.9567);transform-origin:left 0;">Nazwa:</span><div class="a" style="left:1343px;top:1248.7px;width:439.5px;height:35.5px;background:#fff;border:1px solid #a6a6a6"></div><span class="t" style="left:1345.50px;top:1256.46px;font-size:21px;font-family:'Liberation Sans',sans-serif;color:#1a1a1a;transform:scaleX(0.9597);transform-origin:left 0;">Poczta Polska Spółka Akcyjna</span><span class="t" style="left:1796.00px;top:1214.96px;font-size:21px;font-family:'Liberation Sans',sans-serif;color:#222;transform:scaleX(0.9304);transform-origin:left 0;">NIP:</span><div class="a" style="left:1796px;top:1248.7px;width:208.70000000000005px;height:35.5px;background:#fff;border:1px solid #a6a6a6"></div><span class="t" style="left:1798.50px;top:1256.46px;font-size:21px;font-family:'Liberation Sans',sans-serif;color:#1a1a1a;transform:scaleX(0.9332);transform-origin:left 0;">5250007313</span><svg style="left:1982px;top:1264.2px" width="16" height="5"><rect x="0" y="0" width="3.6" height="3.6" fill="#222"/><rect x="5.8" y="0" width="3.6" height="3.6" fill="#222"/><rect x="11.6" y="0" width="3.6" height="3.6" fill="#222"/></svg><span class="t" style="left:2018.30px;top:1214.96px;font-size:21px;font-family:'Liberation Sans',sans-serif;color:#222;transform:scaleX(0.9802);transform-origin:left 0;">Adres linia 1:</span><div class="a" style="left:2018.3px;top:1248.7px;width:437.29999999999995px;height:35.5px;background:#fff;border:1px solid #a6a6a6"></div><span class="t" style="left:2020.80px;top:1256.46px;font-size:21px;font-family:'Liberation Sans',sans-serif;color:#1a1a1a;transform:scaleX(0.9641);transform-origin:left 0;">00-940 Warszawa, ul.Rodziny Hiszpańskich 8</span><span class="t" style="left:2469.00px;top:1214.96px;font-size:21px;font-family:'Liberation Sans',sans-serif;color:#222;transform:scaleX(0.9802);transform-origin:left 0;">Adres linia 2:</span><div class="a" style="left:2469px;top:1248.7px;width:439px;height:35.5px;background:#fff;border:1px solid #a6a6a6"></div><span class="t" style="left:2471.50px;top:1256.46px;font-size:21px;font-family:'Liberation Sans',sans-serif;color:#1a1a1a;transform:scaleX(0.9536);transform-origin:left 0;">UP Częstochowa 1, 42-200 Częstochowa, Stanis</span><span class="t" style="left:1343.40px;top:1304.46px;font-size:21px;font-family:'Liberation Sans',sans-serif;color:#222;transform:scaleX(0.9262);transform-origin:left 0;">Kraj:</span><div class="a" style="left:1343px;top:1337.7px;width:930.5999999999999px;height:35.5px;background:#fff;border:1px solid #a6a6a6"></div><span class="t" style="left:1345.50px;top:1345.46px;font-size:21px;font-family:'Liberation Sans',sans-serif;color:#1a1a1a;transform:scaleX(0.9043);transform-origin:left 0;">Polska</span><span class="t" style="left:2287.00px;top:1304.46px;font-size:21px;font-family:'Liberation Sans',sans-serif;color:#222;transform:scaleX(0.9518);transform-origin:left 0;">Kod kraju:</span><div class="a" style="left:2287px;top:1337.7px;width:621px;height:35.5px;background:#fff;border:1px solid #a6a6a6"></div><span class="t" style="left:2289.50px;top:1345.46px;font-size:21px;font-family:'Liberation Sans',sans-serif;color:#1a1a1a;transform:scaleX(0.8564);transform-origin:left 0;">PL</span><div class="a" style="left:1319px;top:1410px;width:1613px;height:176px;background:#f0f0f0;border:1px solid #cdcdcd"></div><div class="a" style="left:1319px;top:1410px;width:1613px;height:52.5px;background:#d3d3d3;border:1px solid #c6c6c6"></div><span class="t" style="left:1343.60px;top:1427.03px;font-size:21.5px;font-family:'Liberation Sans',sans-serif;font-weight:bold;color:#222;transform:scaleX(0.9898);transform-origin:left 0;">Numer dokumentu</span><span class="t" style="left:1343.40px;top:1492.26px;font-size:21px;font-family:'Liberation Sans',sans-serif;color:#222;transform:scaleX(0.9860);transform-origin:left 0;">Oznaczenie typu:</span><div class="a" style="left:1343px;top:1526px;width:262.5px;height:35.5px;background:#fff;border:1px solid #a6a6a6"></div><svg style="left:1583.8px;top:1541.5px" width="12" height="6"><path d="M0 0H12L6 6Z" fill="#606060"/></svg><span class="t" style="left:1619.50px;top:1492.26px;font-size:21px;font-family:'Liberation Sans',sans-serif;color:#222;transform:scaleX(0.9875);transform-origin:left 0;">Numer:</span><div class="a" style="left:1619.5px;top:1526px;width:1288.5px;height:35.5px;background:#fff;border:1px solid #a6a6a6"></div><span class="t" style="left:1622.00px;top:1533.76px;font-size:21px;font-family:'Liberation Sans',sans-serif;color:#1a1a1a;transform:scaleX(0.9184);transform-origin:left 0;">F00065G022600236749P</span><div class="a" style="left:1319px;top:1599.5px;width:1613px;height:175.5px;background:#f0f0f0;border:1px solid #cdcdcd"></div><div class="a" style="left:1319px;top:1599.5px;width:1613px;height:52.5px;background:#d3d3d3;border:1px solid #c6c6c6"></div><span class="t" style="left:1343.60px;top:1616.53px;font-size:21.5px;font-family:'Liberation Sans',sans-serif;font-weight:bold;color:#222;transform:scaleX(0.9758);transform-origin:left 0;">Waluta</span><span class="t" style="left:1343.40px;top:1681.26px;font-size:21px;font-family:'Liberation Sans',sans-serif;color:#222;transform:scaleX(0.9259);transform-origin:left 0;">Kod:</span><div class="a" style="left:1343px;top:1715.5px;width:211.5px;height:35.5px;background:#fff;border:1px solid #a6a6a6"></div><span class="t" style="left:1345.50px;top:1723.26px;font-size:21px;font-family:'Liberation Sans',sans-serif;color:#1a1a1a;transform:scaleX(0.9055);transform-origin:left 0;">PLN</span><span class="t" style="left:1568.00px;top:1681.26px;font-size:21px;font-family:'Liberation Sans',sans-serif;color:#222;transform:scaleX(0.9940);transform-origin:left 0;">Waluta:</span><div class="a" style="left:1568px;top:1715.5px;width:699.5px;height:35.5px;background:#fff;border:1px solid #a6a6a6"></div><svg style="left:2245.8px;top:1731.0px" width="12" height="6"><path d="M0 0H12L6 6Z" fill="#606060"/></svg><span class="t" style="left:1570.50px;top:1723.26px;font-size:21px;font-family:'Liberation Sans',sans-serif;color:#1a1a1a;transform:scaleX(1.0092);transform-origin:left 0;">PLN - Złoty</span><span class="t" style="left:2281.00px;top:1681.26px;font-size:21px;font-family:'Liberation Sans',sans-serif;color:#222;transform:scaleX(0.9181);transform-origin:left 0;">Kurs:</span><div class="a" style="left:2281px;top:1715.5px;width:262.5px;height:35.5px;background:#fff;border:1px solid #a6a6a6"></div><svg style="left:2521.8px;top:1731.0px" width="12" height="6"><path d="M0 0H12L6 6Z" fill="#606060"/></svg><span class="t" style="left:2499.81px;top:1723.26px;font-size:21px;font-family:'Liberation Sans',sans-serif;color:#1a1a1a;transform:scaleX(0.7701);transform-origin:right 0;">1</span><span class="t" style="left:2557.50px;top:1681.26px;font-size:21px;font-family:'Liberation Sans',sans-serif;color:#222;transform:scaleX(0.9777);transform-origin:left 0;">Data kursu:</span><div class="a" style="left:2557.5px;top:1715.5px;width:350.5px;height:35.5px;background:#fff;border:1px solid #a6a6a6"></div><svg style="left:2886.3px;top:1731.0px" width="12" height="6"><path d="M0 0H12L6 6Z" fill="#606060"/></svg><div class="a" style="left:0;top:0;width:3840px;height:1988px;overflow:hidden"><div class="a" style="left:1319px;top:1788.6px;width:1613px;height:311.4000000000001px;background:#f0f0f0;border:1px solid #cdcdcd"></div><div class="a" style="left:1319px;top:1788.6px;width:1613px;height:52.5px;background:#d3d3d3;border:1px solid #c6c6c6"></div><span class="t" style="left:1343.60px;top:1805.63px;font-size:21.5px;font-family:'Liberation Sans',sans-serif;font-weight:bold;color:#222;transform:scaleX(0.9206);transform-origin:left 0;">Opis</span><span class="t" style="left:1343.40px;top:1870.26px;font-size:21px;font-family:'Liberation Sans',sans-serif;color:#222;transform:scaleX(0.9589);transform-origin:left 0;">Opis:</span><div class="a" style="left:1343px;top:1904px;width:1565px;height:35.5px;background:#fff;border:1px solid #a6a6a6"></div><span class="t" style="left:1345.50px;top:1911.76px;font-size:21px;font-family:'Liberation Sans',sans-serif;color:#1a1a1a;transform:scaleX(0.9879);transform-origin:left 0;">Przesyłka polecona krajowa - Opłata zasadnicza - Nadanie</span><span class="t" style="left:1343.40px;top:1959.26px;font-size:21px;font-family:'Liberation Sans',sans-serif;color:#222;transform:scaleX(0.9657);transform-origin:left 0;">Uwagi:</span></div><div class="a" style="left:2976px;top:387.2px;width:764px;height:175.8px;background:#f0f0f0;border:1px solid #cdcdcd"></div><div class="a" style="left:2976px;top:387.2px;width:764px;height:52.5px;background:#d3d3d3;border:1px solid #c6c6c6"></div><span class="t" style="left:3000.60px;top:404.23px;font-size:21.5px;font-family:'Liberation Sans',sans-serif;font-weight:bold;color:#222;transform:scaleX(0.9617);transform-origin:left 0;">VAT - pierwszy rejestr VAT</span><span class="t" style="left:3000.30px;top:469.25px;font-size:21px;font-family:'Liberation Sans',sans-serif;color:#222;transform:scaleX(0.9733);transform-origin:left 0;">Data VAT:</span><div class="a" style="left:3000px;top:503.2px;width:201px;height:35.5px;background:#fff;border:1px solid #a6a6a6"></div><svg style="left:3179.3px;top:518.7px" width="12" height="6"><path d="M0 0H12L6 6Z" fill="#606060"/></svg><span class="t" style="left:3002.50px;top:510.96px;font-size:21px;font-family:'Liberation Sans',sans-serif;color:#1a1a1a;transform:scaleX(0.9588);transform-origin:left 0;">2026-02-03</span><span class="t" style="left:3214.30px;top:469.25px;font-size:21px;font-family:'Liberation Sans',sans-serif;color:#222;transform:scaleX(0.9420);transform-origin:left 0;">Rejestr VAT:</span><div class="a" style="left:3214px;top:503.2px;width:502px;height:35.5px;background:#fff;border:1px solid #a6a6a6"></div><svg style="left:3694.3px;top:518.7px" width="12" height="6"><path d="M0 0H12L6 6Z" fill="#606060"/></svg><span class="t" style="left:3216.50px;top:510.96px;font-size:21px;font-family:'Liberation Sans',sans-serif;color:#1a1a1a;transform:scaleX(0.9680);transform-origin:left 0;">Pozostałe nabycie</span><div class="a" style="left:2976px;top:576px;width:764px;height:176px;background:#f0f0f0;border:1px solid #cdcdcd"></div><div class="a" style="left:2976px;top:576px;width:764px;height:52.5px;background:#d3d3d3;border:1px solid #c6c6c6"></div><span class="t" style="left:3000.60px;top:593.03px;font-size:21.5px;font-family:'Liberation Sans',sans-serif;font-weight:bold;color:#222;transform:scaleX(0.9733);transform-origin:left 0;">VAT - drugi rejestr VAT</span><span class="t" style="left:3000.30px;top:658.25px;font-size:21px;font-family:'Liberation Sans',sans-serif;color:#222;transform:scaleX(0.9733);transform-origin:left 0;">Data VAT:</span><div class="a" style="left:3000px;top:692px;width:201px;height:35.5px;background:#fff;border:1px solid #a6a6a6"></div><svg style="left:3179.3px;top:707.5px" width="12" height="6"><path d="M0 0H12L6 6Z" fill="#606060"/></svg><span class="t" style="left:3002.50px;top:699.75px;font-size:21px;font-family:'Liberation Sans',sans-serif;color:#1a1a1a;transform:scaleX(0.9588);transform-origin:left 0;">2026-02-03</span><span class="t" style="left:3214.30px;top:658.25px;font-size:21px;font-family:'Liberation Sans',sans-serif;color:#222;transform:scaleX(0.9420);transform-origin:left 0;">Rejestr VAT:</span><div class="a" style="left:3214px;top:692px;width:502px;height:35.5px;background:#fff;border:1px solid #a6a6a6"></div><svg style="left:3694.3px;top:707.5px" width="12" height="6"><path d="M0 0H12L6 6Z" fill="#606060"/></svg><div class="a" style="left:2976px;top:765.6px;width:764px;height:674.4px;background:#f0f0f0;border:1px solid #cdcdcd"></div><div class="a" style="left:2976px;top:765.6px;width:764px;height:52.5px;background:#d3d3d3;border:1px solid #c6c6c6"></div><span class="t" style="left:3000.60px;top:782.63px;font-size:21.5px;font-family:'Liberation Sans',sans-serif;font-weight:bold;color:#222;transform:scaleX(0.9756);transform-origin:left 0;">Wartości VAT w walucie faktury</span><span class="t" style="left:3000.30px;top:848.75px;font-size:21px;font-family:'Liberation Sans',sans-serif;color:#222;transform:scaleX(0.9128);transform-origin:left 0;">23%:</span><div class="a" style="left:3101px;top:841.0px;width:196.5px;height:35.5px;background:#fff;border:1px solid #a6a6a6"></div><span class="t" style="left:3252.62px;top:848.75px;font-size:21px;font-family:'Liberation Sans',sans-serif;color:#1a1a1a;transform:scaleX(0.9052);transform-origin:right 0;">0,00</span><div class="a" style="left:3310px;top:841.0px;width:197px;height:35.5px;background:#fff;border:1px solid #a6a6a6"></div><span class="t" style="left:3462.12px;top:848.75px;font-size:21px;font-family:'Liberation Sans',sans-serif;color:#1a1a1a;transform:scaleX(0.9052);transform-origin:right 0;">0,00</span><div class="a" style="left:3520px;top:841.0px;width:196px;height:35.5px;background:#fff;border:1px solid #a6a6a6"></div><span class="t" style="left:3671.12px;top:848.75px;font-size:21px;font-family:'Liberation Sans',sans-serif;color:#1a1a1a;transform:scaleX(0.9052);transform-origin:right 0;">0,00</span><span class="t" style="left:3000.30px;top:897.85px;font-size:21px;font-family:'Liberation Sans',sans-serif;color:#222;transform:scaleX(0.9119);transform-origin:left 0;">8%:</span><div class="a" style="left:3101px;top:890.09px;width:196.5px;height:35.5px;background:#fff;border:1px solid #a6a6a6"></div><span class="t" style="left:3252.62px;top:897.85px;font-size:21px;font-family:'Liberation Sans',sans-serif;color:#1a1a1a;transform:scaleX(0.9052);transform-origin:right 0;">0,00</span><div class="a" style="left:3310px;top:890.09px;width:197px;height:35.5px;background:#fff;border:1px solid #a6a6a6"></div><span class="t" style="left:3462.12px;top:897.85px;font-size:21px;font-family:'Liberation Sans',sans-serif;color:#1a1a1a;transform:scaleX(0.9052);transform-origin:right 0;">0,00</span><div class="a" style="left:3520px;top:890.09px;width:196px;height:35.5px;background:#fff;border:1px solid #a6a6a6"></div><span class="t" style="left:3671.12px;top:897.85px;font-size:21px;font-family:'Liberation Sans',sans-serif;color:#1a1a1a;transform:scaleX(0.9052);transform-origin:right 0;">0,00</span><span class="t" style="left:3000.30px;top:946.94px;font-size:21px;font-family:'Liberation Sans',sans-serif;color:#222;transform:scaleX(0.9119);transform-origin:left 0;">5%:</span><div class="a" style="left:3101px;top:939.1800000000001px;width:196.5px;height:35.5px;background:#fff;border:1px solid #a6a6a6"></div><span class="t" style="left:3252.62px;top:946.94px;font-size:21px;font-family:'Liberation Sans',sans-serif;color:#1a1a1a;transform:scaleX(0.9052);transform-origin:right 0;">0,00</span><div class="a" style="left:3310px;top:939.1800000000001px;width:197px;height:35.5px;background:#fff;border:1px solid #a6a6a6"></div><span class="t" style="left:3462.12px;top:946.94px;font-size:21px;font-family:'Liberation Sans',sans-serif;color:#1a1a1a;transform:scaleX(0.9052);transform-origin:right 0;">0,00</span><div class="a" style="left:3520px;top:939.1800000000001px;width:196px;height:35.5px;background:#fff;border:1px solid #a6a6a6"></div><span class="t" style="left:3671.12px;top:946.94px;font-size:21px;font-family:'Liberation Sans',sans-serif;color:#1a1a1a;transform:scaleX(0.9052);transform-origin:right 0;">0,00</span><span class="t" style="left:3000.30px;top:996.02px;font-size:21px;font-family:'Liberation Sans',sans-serif;color:#222;transform:scaleX(0.9119);transform-origin:left 0;">4%:</span><div class="a" style="left:3101px;top:988.27px;width:196.5px;height:35.5px;background:#fff;border:1px solid #a6a6a6"></div><span class="t" style="left:3252.62px;top:996.02px;font-size:21px;font-family:'Liberation Sans',sans-serif;color:#1a1a1a;transform:scaleX(0.9052);transform-origin:right 0;">0,00</span><div class="a" style="left:3310px;top:988.27px;width:197px;height:35.5px;background:#fff;border:1px solid #a6a6a6"></div><span class="t" style="left:3462.12px;top:996.02px;font-size:21px;font-family:'Liberation Sans',sans-serif;color:#1a1a1a;transform:scaleX(0.9052);transform-origin:right 0;">0,00</span><div class="a" style="left:3520px;top:988.27px;width:196px;height:35.5px;background:#fff;border:1px solid #a6a6a6"></div><span class="t" style="left:3671.12px;top:996.02px;font-size:21px;font-family:'Liberation Sans',sans-serif;color:#1a1a1a;transform:scaleX(0.9052);transform-origin:right 0;">0,00</span><span class="t" style="left:3000.30px;top:1045.12px;font-size:21px;font-family:'Liberation Sans',sans-serif;color:#222;transform:scaleX(0.9119);transform-origin:left 0;">0%:</span><div class="a" style="left:3101px;top:1037.3600000000001px;width:196.5px;height:35.5px;background:#fff;border:1px solid #a6a6a6"></div><span class="t" style="left:3252.62px;top:1045.12px;font-size:21px;font-family:'Liberation Sans',sans-serif;color:#1a1a1a;transform:scaleX(0.9052);transform-origin:right 0;">0,00</span><span class="t" style="left:3000.30px;top:1094.21px;font-size:21px;font-family:'Liberation Sans',sans-serif;color:#222;transform:scaleX(0.9709);transform-origin:left 0;">ZW:</span><div class="a" style="left:3101px;top:1086.45px;width:196.5px;height:35.5px;background:#fff;border:1px solid #a6a6a6"></div><span class="t" style="left:3252.62px;top:1094.21px;font-size:21px;font-family:'Liberation Sans',sans-serif;color:#1a1a1a;transform:scaleX(0.9052);transform-origin:right 0;">7,80</span><span class="t" style="left:3000.30px;top:1143.30px;font-size:21px;font-family:'Liberation Sans',sans-serif;color:#222;transform:scaleX(0.9663);transform-origin:left 0;">WDT:</span><div class="a" style="left:3101px;top:1135.54px;width:196.5px;height:35.5px;background:#fff;border:1px solid #a6a6a6"></div><span class="t" style="left:3252.62px;top:1143.30px;font-size:21px;font-family:'Liberation Sans',sans-serif;color:#1a1a1a;transform:scaleX(0.9052);transform-origin:right 0;">0,00</span><span class="t" style="left:3000.30px;top:1192.39px;font-size:21px;font-family:'Liberation Sans',sans-serif;color:#222;transform:scaleX(0.9399);transform-origin:left 0;">Eksport:</span><div class="a" style="left:3101px;top:1184.63px;width:196.5px;height:35.5px;background:#fff;border:1px solid #a6a6a6"></div><span class="t" style="left:3252.62px;top:1192.39px;font-size:21px;font-family:'Liberation Sans',sans-serif;color:#1a1a1a;transform:scaleX(0.9052);transform-origin:right 0;">0,00</span><span class="t" style="left:3000.30px;top:1241.48px;font-size:21px;font-family:'Liberation Sans',sans-serif;color:#222;transform:scaleX(0.9161);transform-origin:left 0;">NP UE:</span><div class="a" style="left:3101px;top:1233.72px;width:196.5px;height:35.5px;background:#fff;border:1px solid #a6a6a6"></div><span class="t" style="left:3252.62px;top:1241.48px;font-size:21px;font-family:'Liberation Sans',sans-serif;color:#1a1a1a;transform:scaleX(0.9052);transform-origin:right 0;">0,00</span><span class="t" style="left:3000.30px;top:1290.57px;font-size:21px;font-family:'Liberation Sans',sans-serif;color:#222;transform:scaleX(0.9367);transform-origin:left 0;">NP:</span><div class="a" style="left:3101px;top:1282.81px;width:196.5px;height:35.5px;background:#fff;border:1px solid #a6a6a6"></div><span class="t" style="left:3252.62px;top:1290.57px;font-size:21px;font-family:'Liberation Sans',sans-serif;color:#1a1a1a;transform:scaleX(0.9052);transform-origin:right 0;">0,00</span><span class="t" style="left:3000.30px;top:1339.66px;font-size:21px;font-family:'Liberation Sans',sans-serif;color:#222;transform:scaleX(0.8975);transform-origin:left 0;">VAT OSS:</span><div class="a" style="left:3101px;top:1331.9px;width:196.5px;height:35.5px;background:#fff;border:1px solid #a6a6a6"></div><span class="t" style="left:3252.62px;top:1339.66px;font-size:21px;font-family:'Liberation Sans',sans-serif;color:#1a1a1a;transform:scaleX(0.9052);transform-origin:right 0;">0,00</span><div class="a" style="left:3310px;top:1331.9px;width:197px;height:35.5px;background:#fff;border:1px solid #a6a6a6"></div><span class="t" style="left:3462.12px;top:1339.66px;font-size:21px;font-family:'Liberation Sans',sans-serif;color:#1a1a1a;transform:scaleX(0.9052);transform-origin:right 0;">0,00</span><div class="a" style="left:3520px;top:1331.9px;width:196px;height:35.5px;background:#fff;border:1px solid #a6a6a6"></div><span class="t" style="left:3671.12px;top:1339.66px;font-size:21px;font-family:'Liberation Sans',sans-serif;color:#1a1a1a;transform:scaleX(0.9052);transform-origin:right 0;">0,00</span><span class="t" style="left:3000.30px;top:1388.75px;font-size:21px;font-family:'Liberation Sans',sans-serif;color:#222;transform:scaleX(0.9384);transform-origin:left 0;">Razem:</span><div class="a" style="left:3101px;top:1380.99px;width:196.5px;height:35.5px;background:#fff;border:1px solid #a6a6a6"></div><span class="t" style="left:3252.62px;top:1388.75px;font-size:21px;font-family:'Liberation Sans',sans-serif;color:#1a1a1a;transform:scaleX(0.9052);transform-origin:right 0;">7,80</span><div class="a" style="left:3310px;top:1380.99px;width:197px;height:35.5px;background:#fff;border:1px solid #a6a6a6"></div><span class="t" style="left:3462.12px;top:1388.75px;font-size:21px;font-family:'Liberation Sans',sans-serif;color:#1a1a1a;transform:scaleX(0.9052);transform-origin:right 0;">0,00</span><div class="a" style="left:3520px;top:1380.99px;width:196px;height:35.5px;background:#fff;border:1px solid #a6a6a6"></div><span class="t" style="left:3671.12px;top:1388.75px;font-size:21px;font-family:'Liberation Sans',sans-serif;color:#1a1a1a;transform:scaleX(0.9052);transform-origin:right 0;">7,80</span><div class="a" style="left:2976px;top:1453.7px;width:764px;height:135.29999999999995px;background:#f0f0f0;border:1px solid #cdcdcd"></div><div class="a" style="left:2976px;top:1453.7px;width:764px;height:52.5px;background:#d3d3d3;border:1px solid #c6c6c6"></div><span class="t" style="left:3000.60px;top:1470.73px;font-size:21.5px;font-family:'Liberation Sans',sans-serif;font-weight:bold;color:#222;transform:scaleX(0.9641);transform-origin:left 0;">Wartości VAT w PLN</span><span class="t" style="left:3000.30px;top:1536.76px;font-size:21px;font-family:'Liberation Sans',sans-serif;color:#222;transform:scaleX(0.9259);transform-origin:left 0;">Razem:</span><div class="a" style="left:3101px;top:1529px;width:196.5px;height:35.5px;background:#fff;border:1px solid #a6a6a6"></div><span class="t" style="left:3252.62px;top:1536.76px;font-size:21px;font-family:'Liberation Sans',sans-serif;color:#1a1a1a;transform:scaleX(0.9052);transform-origin:right 0;">7,80</span><div class="a" style="left:3310px;top:1529px;width:197px;height:35.5px;background:#fff;border:1px solid #a6a6a6"></div><span class="t" style="left:3462.12px;top:1536.76px;font-size:21px;font-family:'Liberation Sans',sans-serif;color:#1a1a1a;transform:scaleX(0.9052);transform-origin:right 0;">0,00</span><div class="a" style="left:3520px;top:1529px;width:196px;height:35.5px;background:#fff;border:1px solid #a6a6a6"></div><span class="t" style="left:3671.12px;top:1536.76px;font-size:21px;font-family:'Liberation Sans',sans-serif;color:#1a1a1a;transform:scaleX(0.9052);transform-origin:right 0;">7,80</span><div class="a" style="left:0;top:0;width:3840px;height:1988px;overflow:hidden"><div class="a" style="left:2976px;top:1602.6px;width:764px;height:497.4000000000001px;background:#f0f0f0;border:1px solid #cdcdcd"></div><div class="a" style="left:2976px;top:1602.6px;width:764px;height:52.5px;background:#d3d3d3;border:1px solid #c6c6c6"></div><span class="t" style="left:3000.60px;top:1619.63px;font-size:21.5px;font-family:'Liberation Sans',sans-serif;font-weight:bold;color:#222;transform:scaleX(0.9434);transform-origin:left 0;">Księgowanie</span><div class="a" style="left:3000px;top:1678px;width:716px;height:136px;background:#f0f0f0;border:1px solid #cdcdcd"></div><div class="a" style="left:3000px;top:1678px;width:716px;height:52.5px;background:#d3d3d3;border:1px solid #c6c6c6"></div><span class="t" style="left:3024.60px;top:1695.03px;font-size:21.5px;font-family:'Liberation Sans',sans-serif;font-weight:bold;color:#222;transform:scaleX(0.9567);transform-origin:left 0;">Podatek dochodowy</span><span class="t" style="left:3024.30px;top:1761.26px;font-size:21px;font-family:'Liberation Sans',sans-serif;color:#222;transform:scaleX(0.9924);transform-origin:left 0;">Data dla przychodu lub kosztu:</span><div class="a" style="left:3321px;top:1754px;width:371px;height:35.5px;background:#fff;border:1px solid #a6a6a6"></div><svg style="left:3670.3px;top:1769.5px" width="12" height="6"><path d="M0 0H12L6 6Z" fill="#606060"/></svg><span class="t" style="left:3440.79px;top:1761.76px;font-size:21px;font-family:'Liberation Sans',sans-serif;color:#1a1a1a;transform:scaleX(0.9588);transform-origin:center 0;">2026-02-03</span><div class="a" style="left:3000px;top:1827.6px;width:716px;height:272.4000000000001px;background:#f0f0f0;border:1px solid #cdcdcd"></div><div class="a" style="left:3000px;top:1827.6px;width:716px;height:52.5px;background:#d3d3d3;border:1px solid #c6c6c6"></div><span class="t" style="left:3024.60px;top:1844.63px;font-size:21.5px;font-family:'Liberation Sans',sans-serif;font-weight:bold;color:#222;transform:scaleX(0.8954);transform-origin:left 0;">KPiR</span><span class="t" style="left:3024.30px;top:1909.26px;font-size:21px;font-family:'Liberation Sans',sans-serif;color:#222;transform:scaleX(0.9601);transform-origin:left 0;">Kolumna 1:</span><div class="a" style="left:3024px;top:1943px;width:437px;height:35.5px;background:#fff;border:1px solid #a6a6a6"></div><svg style="left:3439.3px;top:1958.5px" width="12" height="6"><path d="M0 0H12L6 6Z" fill="#606060"/></svg><span class="t" style="left:3026.50px;top:1950.76px;font-size:21px;font-family:'Liberation Sans',sans-serif;color:#1a1a1a;transform:scaleX(1.0079);transform-origin:left 0;">Zakup towarów handlowych i materiałów</span><span class="t" style="left:3474.30px;top:1909.26px;font-size:21px;font-family:'Liberation Sans',sans-serif;color:#222;transform:scaleX(0.9501);transform-origin:left 0;">Kwota:</span><div class="a" style="left:3474px;top:1943px;width:218px;height:35.5px;background:#fff;border:1px solid #a6a6a6"></div><span class="t" style="left:3647.12px;top:1950.76px;font-size:21px;font-family:'Liberation Sans',sans-serif;color:#1a1a1a;transform:scaleX(0.9052);transform-origin:right 0;">7,80</span></div><div class="a" style="left:3762px;top:387px;width:29.5px;height:1600px;background:#dadada"></div><div class="a" style="left:3762px;top:387px;width:29.5px;height:31px;background:#fff;border:1.5px solid #9c9c9c"></div><div class="a" style="left:3762px;top:416.5px;width:29.5px;height:1050px;background:#fff;border:1.5px solid #9c9c9c"></div><div class="a" style="left:3762px;top:1958px;width:29.5px;height:29.5px;background:#fff;border:1.5px solid #9c9c9c"></div><svg style="left:3762px;top:387px" width="29" height="1600"><path d="M14.5 10L20 18H9Z" fill="#6e6e6e"/><path d="M14.5 1588L20 1580H9Z" fill="#6e6e6e"/></svg><svg style="left:1270px;top:1156px" width="6" height="20"><circle cx="3" cy="3" r="2.2" fill="#444"/><circle cx="3" cy="10" r="2.2" fill="#444"/><circle cx="3" cy="17" r="2.2" fill="#444"/></svg><svg style="left:2951px;top:1176px" width="6" height="20"><circle cx="3" cy="3" r="2.2" fill="#444"/><circle cx="3" cy="10" r="2.2" fill="#444"/><circle cx="3" cy="17" r="2.2" fill="#444"/></svg><svg style="left:0;top:2040px" width="3840" height="120"><rect x="417" y="24.3" width="380" height="30" rx="16" fill="#2a3030" fill-opacity="0.7"/><rect x="0" y="34.5" width="3840" height="1" fill="#8a8a8a"/><rect x="0" y="35.3" width="3840" height="85" fill="#1f2020"/><defs><linearGradient id="wg" gradientUnits="userSpaceOnUse" x1="903" y1="59" x2="944" y2="99"><stop offset="0" stop-color="#86d6fa"/><stop offset="0.5" stop-color="#2cc0ff"/><stop offset="1" stop-color="#0a8ef5"/></linearGradient></defs><path d="M905.5 58.8H922.5V77.8H903V61.3Q903 58.8 905.5 58.8Z" fill="url(#wg)"/><path d="M924.2 58.8H941.3Q943.8 58.8 943.8 61.3V77.8H924.2Z" fill="url(#wg)"/><path d="M903 79.5H922.5V99H905.5Q903 99 903 96.5Z" fill="url(#wg)"/><path d="M924.2 79.5H943.8V96.5Q943.8 99 941.3 99H924.2Z" fill="url(#wg)"/><rect x="967.5" y="50.5" width="383" height="54" rx="27" fill="#393939" stroke="#4a4a4a" stroke-width="1.5"/><path d="M994 51.3H1324" stroke="#5c5c5c" stroke-width="1.2"/><circle cx="999" cy="76" r="9.5" fill="#5e5e5e" stroke="#e6e6e6" stroke-width="2.6"/><path d="M1005.5 82.5L1012.5 89.5" stroke="#e0e0e0" stroke-width="3" stroke-linecap="round"/><text x="1032" y="87" font-family="Liberation Sans" font-size="25" fill="#d6d6d6" textLength="99" lengthAdjust="spacingAndGlyphs">Wyszukaj</text><rect x="1373" y="69" width="31.4" height="27.6" rx="3" fill="#5f5f5f"/><rect x="1383.5" y="59" width="31.5" height="27.5" rx="3" fill="#e6e6e6"/><rect x="1457" y="62" width="26" height="32" fill="#eee" stroke="#999" stroke-width="1"/><path d="M1461 68h8M1461 73h8M1461 78h8M1461 83h8M1461 88h8" stroke="#444" stroke-width="1.6"/><rect x="1471" y="68" width="9" height="12" fill="#fff" stroke="#444" stroke-width="1.2"/><circle cx="1485" cy="62" r="13.6" fill="#ee7f63"/><path d="M1480 62H1490M1485 57V67" stroke="#111" stroke-width="1.8"/><defs><linearGradient id="ffa1546" x1="0.1" y1="1" x2="0.9" y2="0"><stop offset="0" stop-color="#e2137f"/><stop offset="0.35" stop-color="#ff4f3a"/><stop offset="0.65" stop-color="#ff9a1f"/><stop offset="1" stop-color="#ffe83a"/></linearGradient><linearGradient id="ffp1546" x1="0" y1="0" x2="0" y2="1"><stop offset="0" stop-color="#b05cf5"/><stop offset="1" stop-color="#5a48d8"/></linearGradient></defs><circle cx="1546.9" cy="79" r="19.5" fill="url(#ffa1546)"/><path d="M1533.9 60 L1537.9 67 L1540.9 64 L1544.9 71 L1550.9 59 L1552.9 54 L1545.9 48 L1530.9 48Z" fill="#1f2020"/><path d="M1552.9 54 Q1562.9 64 1565.9 74 L1554.9 70Z" fill="#ffd83a"/><circle cx="1546.9" cy="78" r="8.6" fill="url(#ffp1546)"/><path d="M1531.9 71 Q1540.9 67 1545.9 72 Q1540.9 74 1538.9 80 Q1534.9 75 1531.9 71Z" fill="#ffa21f"/><rect x="1541.6" y="105.5" width="10" height="5" rx="2.5" fill="#9a9a9a"/><defs><linearGradient id="ffa1623" x1="0.1" y1="1" x2="0.9" y2="0"><stop offset="0" stop-color="#e2137f"/><stop offset="0.35" stop-color="#ff4f3a"/><stop offset="0.65" stop-color="#ff9a1f"/><stop offset="1" stop-color="#ffe83a"/></linearGradient><linearGradient id="ffp1623" x1="0" y1="0" x2="0" y2="1"><stop offset="0" stop-color="#b05cf5"/><stop offset="1" stop-color="#5a48d8"/></linearGradient></defs><circle cx="1623.9" cy="79" r="19.5" fill="url(#ffa1623)"/><path d="M1610.9 60 L1614.9 67 L1617.9 64 L1621.9 71 L1627.9 59 L1629.9 54 L1622.9 48 L1607.9 48Z" fill="#1f2020"/><path d="M1629.9 54 Q1639.9 64 1642.9 74 L1631.9 70Z" fill="#ffd83a"/><circle cx="1623.9" cy="78" r="8.6" fill="url(#ffp1623)"/><path d="M1608.9 71 Q1617.9 67 1622.9 72 Q1617.9 74 1615.9 80 Q1611.9 75 1608.9 71Z" fill="#ffa21f"/><rect x="1618.7" y="105.5" width="10" height="5" rx="2.5" fill="#9a9a9a"/><defs><linearGradient id="tbg" x1="0" y1="0" x2="0" y2="1"><stop offset="0" stop-color="#2f8cf0"/><stop offset="1" stop-color="#0b5ac4"/></linearGradient></defs><path d="M1689 60Q1678 68 1680 82Q1683 99 1701 100Q1719 99 1721 82Q1722 72 1714 64Q1711 72 1706 74Q1697 70 1689 72Z" fill="url(#tbg)"/><ellipse cx="1701" cy="80" rx="10.5" ry="8.5" fill="#d6ebff"/><path d="M1692 75L1701 82L1710 75" stroke="#a9cdf5" stroke-width="1.6" fill="none"/><circle cx="1716" cy="62" r="12" fill="#e8123a"/><text x="1716" y="69.5" text-anchor="middle" font-family="Liberation Sans" font-size="19" fill="#fff">1</text><rect x="1695.7" y="105.5" width="10" height="5" rx="2.5" fill="#9a9a9a"/><g transform="translate(1777.5 78.5) rotate(-42)"><path d="M-23 0L-16 -7.5H16Q23.5 -7.5 23.5 0Q23.5 7.5 16 7.5H-16Z" fill="#000" stroke="#fff" stroke-width="3" stroke-linejoin="round"/><path d="M11 -7.5V7.5" stroke="#fff" stroke-width="2.5"/><path d="M-20 0L-15 -3.5V3.5Z" fill="#fff"/></g><rect x="1772.7" y="105.5" width="10" height="5" rx="2.5" fill="#9a9a9a"/><g transform="translate(1834.5 58.3) scale(1.72)"><path fill="#fff" d="M22.2819 9.8211a5.9847 5.9847 0 0 0-.5157-4.9108 6.0462 6.0462 0 0 0-6.5098-2.9A6.0651 6.0651 0 0 0 4.9807 4.1818a5.9847 5.9847 0 0 0-3.9977 2.9 6.0462 6.0462 0 0 0 .7427 7.0966 5.98 5.98 0 0 0 .511 4.9107 6.051 6.051 0 0 0 6.5146 2.9001A5.9847 5.9847 0 0 0 13.2599 24a6.0557 6.0557 0 0 0 5.7718-4.2058 5.9894 5.9894 0 0 0 3.9977-2.9001 6.0557 6.0557 0 0 0-.7475-7.0729zm-9.022 12.6081a4.4755 4.4755 0 0 1-2.8764-1.0408l.1419-.0804 4.7783-2.7582a.7948.7948 0 0 0 .3927-.6813v-6.7369l2.02 1.1686a.071.071 0 0 1 .038.052v5.5826a4.504 4.504 0 0 1-4.4945 4.4944zm-9.6607-4.1254a4.4708 4.4708 0 0 1-.5346-3.0137l.142.0852 4.783 2.7582a.7712.7712 0 0 0 .7806 0l5.8428-3.3685v2.3324a.0804.0804 0 0 1-.0332.0615L9.74 19.9502a4.4992 4.4992 0 0 1-6.1408-1.6464zM2.3408 7.8956a4.485 4.485 0 0 1 2.3655-1.9728V11.6a.7664.7664 0 0 0 .3879.6765l5.8144 3.3543-2.0201 1.1685a.0757.0757 0 0 1-.071 0l-4.8303-2.7865A4.504 4.504 0 0 1 2.3408 7.872zm16.5963 3.8558L13.1038 8.364 15.1192 7.2a.0757.0757 0 0 1 .071 0l4.8303 2.7913a4.4944 4.4944 0 0 1-.6765 8.1042v-5.6772a.79.79 0 0 0-.407-.667zm2.0107-3.0231l-.142-.0852-4.7735-2.7818a.7759.7759 0 0 0-.7854 0L9.409 9.2297V6.8974a.0662.0662 0 0 1 .0284-.0615l4.8303-2.7866a4.4992 4.4992 0 0 1 6.6802 4.66zM8.3065 12.863l-2.02-1.1638a.0804.0804 0 0 1-.038-.0567V6.0742a4.4992 4.4992 0 0 1 7.3757-3.4537l-.142.0805L8.704 5.459a.7948.7948 0 0 0-.3927.6813zm1.0976-2.3654l2.602-1.4998 2.6069 1.4998v2.9994l-2.5974 1.4997-2.6067-1.4997Z"/></g><polygon points="1931.9,57.7 1949.7,68 1949.7,88.4 1931.9,98.7 1914.1,88.4 1914.1,68" fill="#262626" stroke="#a8a8a8" stroke-width="1.3"/><path d="M1925.98 66.07A13.5 13.5 0 0 1 1937.82 66.07" fill="none" stroke="#ffcf24" stroke-width="4"/><path d="M1939.45 67.01A13.5 13.5 0 0 1 1945.37 77.26" fill="none" stroke="#45e06a" stroke-width="4"/><path d="M1945.37 79.14A13.5 13.5 0 0 1 1939.45 89.39" fill="none" stroke="#22b8ff" stroke-width="4"/><path d="M1937.82 90.33A13.5 13.5 0 0 1 1925.98 90.33" fill="none" stroke="#2a5cff" stroke-width="4"/><path d="M1924.35 89.39A13.5 13.5 0 0 1 1918.43 79.14" fill="none" stroke="#b640ff" stroke-width="4"/><path d="M1918.43 77.26A13.5 13.5 0 0 1 1924.35 67.01" fill="none" stroke="#ff4d4d" stroke-width="4"/><path d="M1926.5 72.5A8.5 8.5 0 1 0 1937.3 72.5" fill="none" stroke="#f2f2f2" stroke-width="3.6"/><rect x="1930.2" y="67" width="3.4" height="8.5" fill="#f2f2f2"/><circle cx="1931.9" cy="63.5" r="1.8" fill="#f2f2f2"/><circle cx="2009" cy="77.7" r="21" fill="#e53b2f"/><path d="M2009 77.7L2027.2 67.2A21 21 0 0 1 2009 98.7Z" fill="#fbc02d"/><path d="M2009 77.7L2009 98.7A21 21 0 0 1 1990.8 67.2Z" fill="#2da44e"/><circle cx="2009" cy="77.7" r="9.5" fill="#fff"/><circle cx="2009" cy="77.7" r="7.6" fill="#3b82f6"/><circle cx="2082.4" cy="74.6" r="16" fill="#f4d26a" stroke="#1b1b6b" stroke-width="1.2"/><g transform="translate(2092.9 84) rotate(35)"><rect x="-9" y="-9" width="18" height="18" rx="2" fill="#e8e8ee" stroke="#1b1b6b" stroke-width="1.4"/><rect x="-3" y="1" width="5" height="6" fill="#2233cc"/></g><rect x="2081.0" y="105.5" width="10" height="5" rx="2.5" fill="#9a9a9a"/><circle cx="2160" cy="74.6" r="16" fill="#f4d26a" stroke="#1b1b6b" stroke-width="1.2"/><g transform="translate(2170.5 84) rotate(35)"><rect x="-9" y="-9" width="18" height="18" rx="2" fill="#e8e8ee" stroke="#1b1b6b" stroke-width="1.4"/><rect x="-3" y="1" width="5" height="6" fill="#2233cc"/></g><rect x="2158.6" y="105.5" width="10" height="5" rx="2.5" fill="#9a9a9a"/><circle cx="2236.5" cy="74.6" r="16" fill="#f4d26a" stroke="#1b1b6b" stroke-width="1.2"/><g transform="translate(2247.0 84) rotate(35)"><rect x="-9" y="-9" width="18" height="18" rx="2" fill="#e8e8ee" stroke="#1b1b6b" stroke-width="1.4"/><rect x="-3" y="1" width="5" height="6" fill="#2233cc"/></g><rect x="2235.1" y="105.5" width="10" height="5" rx="2.5" fill="#9a9a9a"/><defs><radialGradient id="spg" cx="0.45" cy="0.4" r="0.6"><stop offset="0" stop-color="#ee2a44"/><stop offset="1" stop-color="#b50c22"/></radialGradient></defs><circle cx="2317.2" cy="77.7" r="21" fill="url(#spg)"/><path d="M2303 92Q2299 70 2314 62Q2324 58 2332 65" fill="none" stroke="#fff" stroke-width="2.6"/><path d="M2307 92Q2304 74 2316 67Q2325 64 2331 70" fill="none" stroke="#fff" stroke-width="2.2"/><path d="M2310 94Q2307 80 2315 73Q2324 68 2330 74L2331 79Q2323 76 2319 80Q2326 84 2327 93L2322 96Q2318 88 2316 84Q2313 90 2314 96Z" fill="#fff"/><rect x="2312" y="105.5" width="10" height="5" rx="2.5" fill="#9a9a9a"/><defs><linearGradient id="xg" x1="0" y1="0" x2="0" y2="1"><stop offset="0" stop-color="#1d4a9a"/><stop offset="1" stop-color="#062a6e"/></linearGradient></defs><rect x="2373.8" y="57.8" width="40.2" height="40" rx="3" fill="url(#xg)"/><text x="2394.1" y="83.8" text-anchor="middle" font-family="Liberation Sans" font-weight="bold" font-size="30" fill="#e9edf3" textLength="33" lengthAdjust="spacingAndGlyphs">XML</text><ellipse cx="2394" cy="89.5" rx="13" ry="4" fill="none" stroke="#5fb8ff" stroke-width="1.6"/><ellipse cx="2394" cy="89" rx="7" ry="2" fill="none" stroke="#9ad6ff" stroke-width="1.3"/><rect x="2388.7" y="105.5" width="10" height="5" rx="2.5" fill="#9a9a9a"/><circle cx="2471" cy="77.3" r="19.4" fill="#7b36b0"/><g transform="translate(2456.6 62.9) scale(1.2)"><path fill="#f3f3f5" d="M12 .297c-6.63 0-12 5.373-12 12 0 5.303 3.438 9.8 8.205 11.385.6.113.82-.258.82-.577 0-.285-.01-1.04-.015-2.04-3.338.724-4.042-1.61-4.042-1.61C4.422 18.07 3.633 17.7 3.633 17.7c-1.087-.744.084-.729.084-.729 1.205.084 1.838 1.236 1.838 1.236 1.07 1.835 2.809 1.305 3.495.998.108-.776.417-1.305.76-1.605-2.665-.3-5.466-1.332-5.466-5.93 0-1.31.465-2.38 1.235-3.22-.135-.303-.54-1.523.105-3.176 0 0 1.005-.322 3.3 1.23.96-.267 1.98-.399 3-.405 1.02.006 2.04.138 3 .405 2.28-1.552 3.285-1.23 3.285-1.23.645 1.653.24 2.873.12 3.176.765.84 1.23 1.91 1.23 3.22 0 4.61-2.805 5.625-5.475 5.92.42.36.81 1.096.81 2.22 0 1.606-.015 2.896-.015 3.286 0 .315.21.69.825.57C20.565 22.092 24 17.592 24 12.297c0-6.627-5.373-12-12-12"/></g><rect x="2465.5" y="105.5" width="10" height="5" rx="2.5" fill="#9a9a9a"/><defs><linearGradient id="vsg" x1="0" y1="0" x2="1" y2="1"><stop offset="0" stop-color="#f08cf0"/><stop offset="1" stop-color="#7a48e0"/></linearGradient></defs><path d="M2527 66L2533 62L2539 66V88L2533 92L2527 88Z" fill="#6a3bd0"/><path d="M2533 62L2562 93L2556 98L2527 66Z" fill="url(#vsg)"/><path d="M2527 88L2556 58L2562 64L2535 93Z" fill="#9b5cf0"/><path d="M2556 58L2568.5 65V91.5L2556 98Z" fill="url(#vsg)"/><rect x="2542" y="105.5" width="10" height="5" rx="2.5" fill="#9a9a9a"/><rect x="2617" y="60" width="26.5" height="26" rx="3.5" fill="none" stroke="#1b9fdd" stroke-width="5.5"/><rect x="2606.6" y="69.3" width="26" height="26.5" rx="3.5" fill="none" stroke="#f39a0f" stroke-width="5.5"/><path d="M2617 72V86" stroke="#1b9fdd" stroke-width="5.5"/><rect x="2619" y="105.5" width="10" height="5" rx="2.5" fill="#9a9a9a"/><path d="M2700 57.4L2717.8 74.8L2701 94.5L2681 76.7Z" fill="#6aa820" stroke="#6aa820" stroke-width="2" stroke-linejoin="round"/><path d="M2701 94.5L2698 97.5" stroke="#6aa820" stroke-width="3"/><path d="M2700 98.8L2723 78" stroke="#6aa820" stroke-width="2.4"/><path d="M2700 95.8L2719 77.5" stroke="#263d12" stroke-width="1.8"/><text x="2700.5" y="83.5" text-anchor="middle" font-family="Liberation Sans" font-weight="bold" font-size="19" fill="#fff">?</text><rect x="2695.7" y="105.5" width="10" height="5" rx="2.5" fill="#9a9a9a"/><defs><radialGradient id="org" cx="0.5" cy="0.35" r="0.7"><stop offset="0" stop-color="#f6a24a"/><stop offset="1" stop-color="#d9650a"/></radialGradient></defs><circle cx="2778" cy="78" r="18.5" fill="url(#org)"/><path d="M2768 74A10.5 10.5 0 0 1 2786 70" stroke="#fff" stroke-width="3.2" fill="none"/><path d="M2789 64V74H2780Z" fill="#fff"/><path d="M2788 82A10.5 10.5 0 0 1 2770 86" stroke="#fff" stroke-width="3.2" fill="none"/><path d="M2767 92V82H2776Z" fill="#fff"/><rect x="2773" y="105.5" width="10" height="5" rx="2.5" fill="#9a9a9a"/><rect x="2898.7" y="43.5" width="69.8" height="69" rx="5" fill="#2e2e2e"/><circle cx="2856" cy="78" r="20" fill="#d42027"/><text x="2856" y="85.5" text-anchor="middle" font-family="Liberation Sans" font-weight="bold" font-size="20" fill="#fff" textLength="32" lengthAdjust="spacingAndGlyphs">TM</text><circle cx="2933.6" cy="78" r="20" fill="#d42027"/><text x="2933.6" y="85.5" text-anchor="middle" font-family="Liberation Sans" font-weight="bold" font-size="20" fill="#fff" textLength="32" lengthAdjust="spacingAndGlyphs">TM</text><rect x="2851" y="105.5" width="10" height="5" rx="2.5" fill="#9a9a9a"/><rect x="2919" y="105.5" width="28" height="5" rx="2.5" fill="#f08a6a"/><path d="M3548.5 83L3557.5 73.5L3566.5 83" fill="none" stroke="#fff" stroke-width="2.2"/><rect x="3601" y="65" width="22" height="19" rx="1" fill="none" stroke="#fff" stroke-width="2"/><path d="M3608 84V89M3604 89.5H3616" stroke="#fff" stroke-width="2"/><rect x="3620" y="62" width="7" height="9" rx="1" fill="#1c1c1c" stroke="#fff" stroke-width="1.8"/><path d="M3623.5 71V92" stroke="#fff" stroke-width="2"/><path d="M3643 72H3649L3656 65.5V90L3649 84H3643Z" fill="none" stroke="#fff" stroke-width="2" stroke-linejoin="round"/><path d="M3660 71Q3664 77.5 3660 84M3664 67Q3670 77.5 3664 88M3668 63Q3676 77.5 3668 92" fill="none" stroke="#fff" stroke-width="2"/></svg><span class="t" style="left:3752.78px;top:2093.33px;font-size:21.5px;font-family:'Liberation Sans',sans-serif;color:#fff;transform:scaleX(0.9384);transform-origin:right 0;">23:11</span><span class="t" style="left:3695.02px;top:2120.33px;font-size:21.5px;font-family:'Liberation Sans',sans-serif;color:#fff;transform:scaleX(0.9638);transform-origin:right 0;">2026-02-04</span><svg style="left:3808px;top:2044px" width="24" height="24"><rect x="18" y="2" width="2.6" height="2.6" fill="#a8a8a8"/><rect x="18" y="8" width="2.6" height="2.6" fill="#a8a8a8"/><rect x="12" y="8" width="2.6" height="2.6" fill="#a8a8a8"/><rect x="18" y="14" width="2.6" height="2.6" fill="#a8a8a8"/><rect x="12" y="14" width="2.6" height="2.6" fill="#a8a8a8"/><rect x="6" y="14" width="2.6" height="2.6" fill="#a8a8a8"/></svg>
</body></html>
